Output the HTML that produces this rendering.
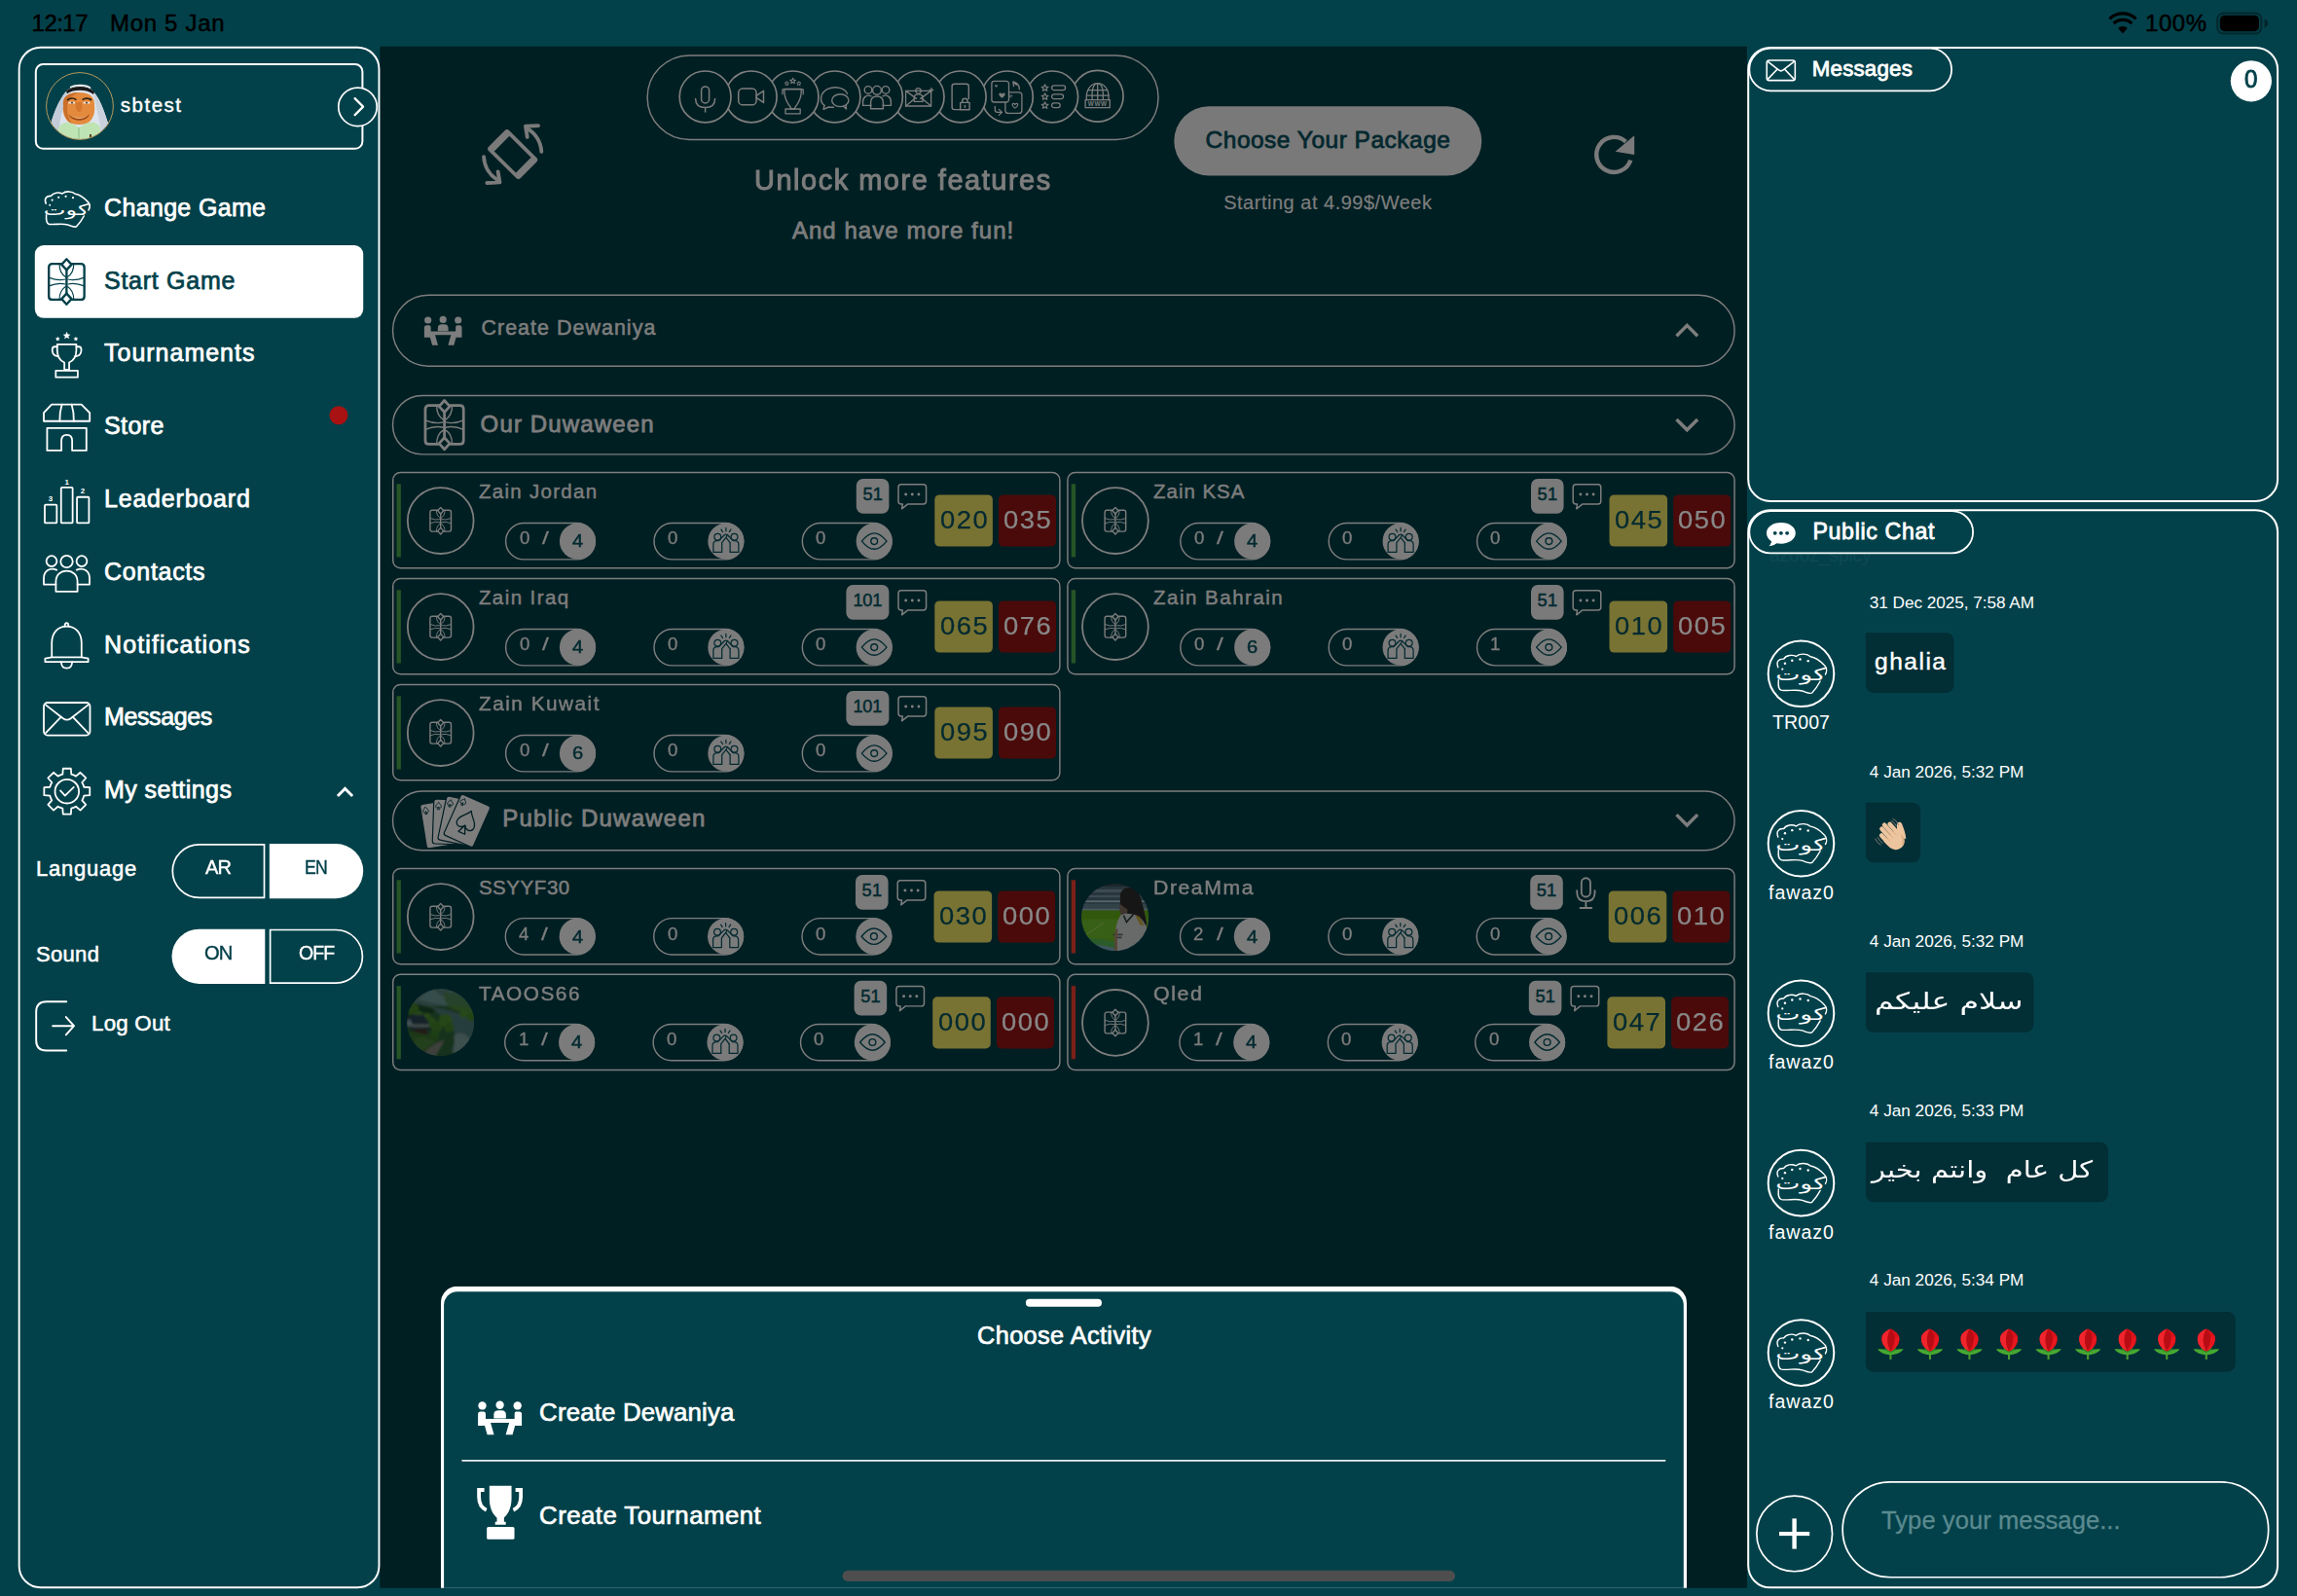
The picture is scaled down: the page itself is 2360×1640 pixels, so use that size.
<!DOCTYPE html>
<html lang="en"><head><meta charset="utf-8"><title>Kout - Start Game</title>
<style>
html,body{margin:0;padding:0;}
body{width:2360px;height:1640px;overflow:hidden;background:#03414a;position:relative;font-family:"Liberation Sans","DejaVu Sans",sans-serif;}
.t{position:absolute;white-space:nowrap;}
div{box-sizing:border-box;}
svg{display:block;}
</style></head><body>
<div class="t" id="sb_time" style="left:32.6px;top:12.0px;font-size:24px;line-height:24px;color:#000;-webkit-text-stroke:0.5px #000;letter-spacing:-0.54px;">12:17</div>
<div class="t" id="sb_date" style="left:113.0px;top:12.0px;font-size:24px;line-height:24px;color:#000;-webkit-text-stroke:0.5px #000;letter-spacing:0.68px;">Mon 5 Jan</div>
<div class="t" id="sb_pct" style="left:2204.0px;top:12.0px;font-size:24px;line-height:24px;color:#000;-webkit-text-stroke:0.5px #000;letter-spacing:0.54px;">100%</div>
<svg style="position:absolute;left:2166px;top:13px;overflow:visible" width="31" height="23"><svg x="0.00" y="0.50" width="30.00" height="21.00" viewBox="0 0 30 21" overflow="visible"><path d="M15 21 L10.2 15.4 A7.2 7.2 0 0 1 19.8 15.4 Z" fill="#000"/><path d="M5.6 10.6 A13.6 13.6 0 0 1 24.4 10.6" fill="none" stroke="#000" stroke-width="3.4" /><path d="M1.4 5.8 A20 20 0 0 1 28.6 5.8" fill="none" stroke="#000" stroke-width="3.2"/></svg></svg>
<svg style="position:absolute;left:2277px;top:12px;overflow:visible" width="49" height="25"><svg x="0.20" y="0.40" width="47.20" height="23.20" viewBox="0 0 47.20 23.20" overflow="visible"><rect x="1.00" y="1.00" width="45.20" height="21.20" rx="6.50" fill="none" stroke="rgba(0,0,0,.38)" stroke-width="2"/></svg></svg>
<svg style="position:absolute;left:2280px;top:15px;overflow:visible" width="43" height="19"><svg x="0.80" y="0.80" width="40.20" height="16.40" viewBox="0 0 40.2 16.4" overflow="visible"><rect width="40.2" height="16.4" rx="4.6" fill="#000"/></svg></svg>
<svg style="position:absolute;left:2326px;top:19px;overflow:visible" width="6" height="11"><svg x="0.60" y="0.60" width="4.00" height="8.80" viewBox="0 0 4 8.8" overflow="visible"><path d="M0 0 Q3.6 1.2 3.6 4.4 Q3.6 7.6 0 8.8 Z" fill="rgba(0,0,0,.42)"/></svg></svg>
<svg style="position:absolute;left:390px;top:47px;overflow:visible" width="1406" height="1586"><svg x="0.30" y="0.70" width="1404.60" height="1584.10" viewBox="0 0 1404.6 1584.1" overflow="visible"><rect width="1404.6" height="1584.1" fill="#001f23"/></svg></svg>
<svg style="position:absolute;left:18px;top:47px;overflow:visible" width="374" height="1587"><svg x="0.70" y="0.80" width="371.70" height="1584.40" viewBox="0 0 371.70 1584.40" overflow="visible"><rect x="0.95" y="0.95" width="369.80" height="1582.50" rx="22.05" fill="#03414a" stroke="#ffffff" stroke-width="1.9"/></svg></svg>
<svg style="position:absolute;left:35px;top:65px;overflow:visible" width="340" height="90"><svg x="0.80" y="0.00" width="337.60" height="88.80" viewBox="0 0 337.60 88.80" overflow="visible"><rect x="1.00" y="1.00" width="335.60" height="86.80" rx="7.50" fill="none" stroke="#ffffff" stroke-width="2"/></svg></svg>
<svg style="position:absolute;left:45.8px;top:73.4px" width="72" height="72" viewBox="-36 -36 72 72"><clipPath id="cpm"><circle cx="0" cy="0" r="34"/></clipPath><g clip-path="url(#cpm)"><rect x="-36" y="-36" width="72" height="72" fill="#03414a"/><path d="M-34 36 C-30 14 -22 -8 -12 -17 C-4 -23 8 -22 14 -15 C22 -6 28 12 34 36 Z" fill="#dde3ec"/><path d="M-34 36 C-30 14 -22 -8 -12 -17 L-16 0 C-20 10 -22 24 -22 36 Z" fill="#c3ccd8"/><path d="M34 36 C28 12 22 -6 14 -15 L17 2 C20 12 22 24 22 36 Z" fill="#c9d1dc"/><path d="M-14 -15.6 C-6 -21.6 8 -21.6 15 -14.6 L14 -12 C8 -17.4 -6 -17.6 -13 -12.8 Z" fill="#1a1a1a"/><path d="M-10 -19.4 C-4 -22.4 6 -22.4 11 -18.6" stroke="#f4f4f4" stroke-width="1.6" fill="none"/><path d="M-17 0 C-18 -9 -13 -14 -1 -14 C11 -14 15.6 -9 15 0 C16 6 14 12 10 16 C6 20 -8 20 -12 16 C-16 12 -18 6 -17 0 Z" fill="#e48a3c"/><path d="M-17 0 C-18 -9 -13 -14 -1 -14 C-9 -11 -13 -6 -13 2 C-13 9 -11 14 -8 18 C-14 15 -17 8 -17 0 Z" fill="#c96f2a"/><path d="M-12 8 C-8 14 6 14 10 8 C8 17 -9 17 -12 8 Z" fill="#9c4a18"/><path d="M-8 10 C-4 12.6 3 12.6 7 10 C4 14 -5 14 -8 10 Z" fill="#e9b184"/><path d="M-4 -4 C-5 2 -3 6 -0.6 6 C2 6 3 2 1.6 -4 Z" fill="#d5782e"/><path d="M-13 -6 C-10 -8.4 -6 -8.4 -3.6 -6.4 M2.6 -6.4 C5 -8.4 9.6 -8.4 12 -6" stroke="#33200f" stroke-width="1.8" fill="none"/><path d="M-11.6 -3.4 H-5 M3.6 -3.4 H10.4" stroke="#f1e7da" stroke-width="1.6"/><circle cx="-8" cy="-3.4" r="0.9" fill="#222"/><circle cx="7" cy="-3.4" r="0.9" fill="#222"/><path d="M-22 36 V22 C-18 16 -12 16 -8 18 L-1 22 L6 18 C12 16 18 16 21 22 V36 Z" fill="#bfe4b4"/><path d="M-1 22 V36" stroke="#8ebb86" stroke-width="1"/><rect x="10" y="29" width="2" height="3.4" fill="#5a3a24"/></g><circle cx="0" cy="0" r="34.4" fill="none" stroke="#b49a5c" stroke-width="1"/></svg>
<div class="t" id="sb_user" style="left:123.8px;top:97.5px;font-size:20.5px;line-height:20.5px;color:#ffffff;-webkit-text-stroke:0.4px #ffffff;letter-spacing:1.50px;">sbtest</div>
<svg style="position:absolute;left:346px;top:89px;overflow:visible" width="44" height="43"><svg x="0.90" y="0.20" width="41.20" height="41.20" viewBox="0 0 41.20 41.20" overflow="visible"><rect x="0.85" y="0.85" width="39.50" height="39.50" rx="19.75" fill="#03414a" stroke="#ffffff" stroke-width="1.7"/></svg></svg>
<svg style="position:absolute;left:362px;top:99px;overflow:visible" width="14" height="22"><svg x="0.60" y="0.60" width="12.00" height="20.00" viewBox="0 0 12 20" overflow="visible"><path d="M2 1.5 L10.5 10 L2 18.5" fill="none" stroke="#ffffff" stroke-width="2.2" stroke-linecap="round" stroke-linejoin="round" /></svg></svg>
<svg style="position:absolute;left:35px;top:252px;overflow:visible" width="340" height="76"><svg x="0.80" y="0.00" width="337.40" height="74.80" viewBox="0 0 337.40 74.80" overflow="visible"><rect width="337.40" height="74.80" rx="9.00" fill="#fff"/></svg></svg>
<div class="t" id="m0" style="left:107.0px;top:200.6px;font-size:25px;line-height:25px;color:#ffffff;-webkit-text-stroke:0.75px #ffffff;letter-spacing:0.34px;">Change Game</div>
<div class="t" id="m1" style="left:107.0px;top:275.5px;font-size:25px;line-height:25px;color:#03414a;-webkit-text-stroke:0.75px #03414a;letter-spacing:0.73px;">Start Game</div>
<div class="t" id="m2" style="left:107.0px;top:350.3px;font-size:25px;line-height:25px;color:#ffffff;-webkit-text-stroke:0.75px #ffffff;letter-spacing:0.99px;">Tournaments</div>
<div class="t" id="m3" style="left:107.0px;top:425.1px;font-size:25px;line-height:25px;color:#ffffff;-webkit-text-stroke:0.75px #ffffff;letter-spacing:0.41px;">Store</div>
<div class="t" id="m4" style="left:107.0px;top:500.0px;font-size:25px;line-height:25px;color:#ffffff;-webkit-text-stroke:0.75px #ffffff;letter-spacing:0.80px;">Leaderboard</div>
<div class="t" id="m5" style="left:107.0px;top:574.8px;font-size:25px;line-height:25px;color:#ffffff;-webkit-text-stroke:0.75px #ffffff;letter-spacing:0.69px;">Contacts</div>
<div class="t" id="m6" style="left:107.0px;top:649.6px;font-size:25px;line-height:25px;color:#ffffff;-webkit-text-stroke:0.75px #ffffff;letter-spacing:1.14px;">Notifications</div>
<div class="t" id="m7" style="left:107.0px;top:724.4px;font-size:25px;line-height:25px;color:#ffffff;-webkit-text-stroke:0.75px #ffffff;letter-spacing:-0.39px;">Messages</div>
<div class="t" id="m8" style="left:107.0px;top:799.3px;font-size:25px;line-height:25px;color:#ffffff;-webkit-text-stroke:0.75px #ffffff;letter-spacing:0.45px;">My settings</div>
<svg style="position:absolute;left:44px;top:195px;overflow:visible" width="50" height="41"><svg x="0.00" y="0.60" width="49.00" height="39.00" viewBox="0 0 49 39" overflow="visible"><g fill="none" stroke="#ffffff" stroke-width="1.6" stroke-linecap="round" stroke-linejoin="round" ><path d="M3.2 13.5 C1.2 8.5 3.5 5.5 8.5 5.8 C10.5 2.2 16.5 1.6 19.8 3.4 C23.5 0.4 30.5 0.8 33.2 3.6 C37.5 4.2 42.5 7.8 46.2 11.8 C48.6 14.2 48.4 17.8 47 20.2"/><path d="M3.6 25.2 C3.2 30.8 3.4 34.2 6.4 34.8 C12.5 35.6 19.5 33.6 25.5 35.4 C29.5 36.8 32.5 38.4 34.6 37.2 C38 33.6 40.2 30.2 42.2 26.4"/></g><g fill="#ffffff"><circle cx="9.6" cy="10" r="1.1"/><circle cx="16.2" cy="7.2" r="1.1"/><circle cx="23.6" cy="6.2" r="1.1"/><circle cx="31" cy="7.6" r="1.1"/><circle cx="7.2" cy="15.2" r="1"/></g><text x="0.8" y="25.6" textLength="46.6" lengthAdjust="spacingAndGlyphs" font-family="DejaVu Sans, sans-serif" font-size="16" fill="#ffffff">كوت</text></svg></svg>
<svg style="position:absolute;left:48px;top:265px;overflow:visible" width="41" height="50"><svg x="0.80" y="0.00" width="39.20" height="49.00" viewBox="0 0 40 50" overflow="visible"><g fill="none" stroke="#03414a" stroke-width="2.4" stroke-linecap="round" stroke-linejoin="round" ><path d="M15 6.2 H5 Q1.4 6.2 1.4 9.8 V40.2 Q1.4 43.8 5 43.8 H15 M25 6.2 H35 Q38.6 6.2 38.6 9.8 V40.2 Q38.6 43.8 35 43.8 H25"/><path d="M20 1.2 L25.2 7 L20 12.6 L14.8 7 Z M20 37.4 L25.2 43 L20 48.8 L14.8 43 Z"/><path d="M20 12.6 V37.4"/></g><g fill="none" stroke="#03414a" stroke-width="1.2" stroke-linecap="round" stroke-linejoin="round" ><path d="M1.4 20.5 Q11 24.5 18.5 22.5 M38.6 20.5 Q29 24.5 21.5 22.5 M1.4 29.5 Q11 25.5 18.5 27.5 M38.6 29.5 Q29 25.5 21.5 27.5"/><path d="M12.5 6.5 Q12.5 16 19 20 M27.5 6.5 Q27.5 16 21 20 M12.5 43.5 Q12.5 34 19 30 M27.5 43.5 Q27.5 34 21 30"/></g></svg></svg>
<svg style="position:absolute;left:52px;top:340px;overflow:visible" width="34" height="51"><svg x="0.40" y="0.00" width="32.40" height="49.20" viewBox="0 0 33 50" overflow="visible"><polygon points="16.50,0.80 17.61,3.47 20.49,3.70 18.30,5.58 18.97,8.40 16.50,6.89 14.03,8.40 14.70,5.58 12.51,3.70 15.39,3.47" fill="#ffffff"/><polygon points="7.00,5.80 7.69,7.45 9.47,7.60 8.11,8.76 8.53,10.50 7.00,9.57 5.47,10.50 5.89,8.76 4.53,7.60 6.31,7.45" fill="#ffffff"/><polygon points="26.00,5.80 26.69,7.45 28.47,7.60 27.11,8.76 27.53,10.50 26.00,9.57 24.47,10.50 24.89,8.76 23.53,7.60 25.31,7.45" fill="#ffffff"/><g fill="none" stroke="#ffffff" stroke-width="1.8" stroke-linecap="round" stroke-linejoin="round" ><path d="M6.5 14 H26.5 V20 C26.5 27.5 22.5 31.5 19 33 V40.5 H14 V33 C10.5 31.5 6.5 27.5 6.5 20 Z"/><path d="M6.5 16.5 H3.8 C0.8 16.5 0.8 21 2.2 23.8 C3.4 26 5.6 26.6 7.6 26.4 M26.5 16.5 H29.2 C32.2 16.5 32.2 21 30.8 23.8 C29.6 26 27.4 26.6 25.4 26.4"/><path d="M5 41.5 H28 V48.5 H5 Z"/></g></svg></svg>
<svg style="position:absolute;left:44px;top:414px;overflow:visible" width="51" height="51"><svg x="0.00" y="0.70" width="49.20" height="49.20" viewBox="0 0 49 49" overflow="visible"><g fill="none" stroke="#ffffff" stroke-width="1.8" stroke-linecap="round" stroke-linejoin="round" ><path d="M9 1 H39.5 L48 9.5 V18 H1 V9.5 Z"/><path d="M19.5 1 Q17 9 17.3 18 M29.5 1 Q32 9 31.7 18"/><path d="M4.4 25 H44.6 V48 H30 V38 Q30 32 24.5 32 Q19 32 19 38 V48 H4.4 Z"/></g></svg></svg>
<svg style="position:absolute;left:45px;top:491px;overflow:visible" width="49" height="49"><svg x="0.00" y="0.00" width="47.40" height="47.40" viewBox="0 0 48 48" overflow="visible"><g fill="none" stroke="#ffffff" stroke-width="1.8" stroke-linecap="round" stroke-linejoin="round" ><rect x="1" y="28" width="12.5" height="19" rx="1"/><rect x="18" y="10" width="12" height="37" rx="1"/><rect x="34.5" y="20" width="12.5" height="27" rx="1"/></g><g font-family="Liberation Sans, sans-serif" font-weight="bold" font-size="8" fill="#ffffff" text-anchor="middle"><text x="24" y="7">1</text><text x="40.5" y="16.5">2</text><text x="7" y="24.5">3</text></g></svg></svg>
<svg style="position:absolute;left:44px;top:570px;overflow:visible" width="50" height="40"><svg x="0.00" y="0.00" width="49.00" height="39.00" viewBox="0 0 49 39" overflow="visible"><g fill="none" stroke="#ffffff" stroke-width="1.8" stroke-linecap="round" stroke-linejoin="round" ><circle cx="9" cy="6.6" r="5.4"/><circle cx="24.5" cy="7" r="6.2"/><circle cx="40" cy="6.6" r="5.4"/><path d="M14.2 15.6 C7 12.5 1 17 1 24 V30.6 H13.4"/><path d="M34.8 15.6 C42 12.5 48 17 48 24 V30.6 H35.6"/><path d="M13.4 37.8 V28 C13.4 21 18 16.6 24.5 16.6 C31 16.6 35.6 21 35.6 28 V37.8 Z"/></g></svg></svg>
<svg style="position:absolute;left:45px;top:638px;overflow:visible" width="48" height="52"><svg x="0.00" y="0.80" width="47.00" height="49.60" viewBox="0 0 48 50" overflow="visible"><g fill="none" stroke="#ffffff" stroke-width="1.8" stroke-linecap="round" stroke-linejoin="round" ><path d="M22 4.6 Q22 1 24 1 Q26 1 26 4.6"/><path d="M8.4 37 V22 C8.4 11 15 4.6 24 4.6 C33 4.6 39.6 11 39.6 22 V37"/><path d="M8.4 37 L1.4 38.4 V41.8 H46.6 V38.4 L39.6 37"/><path d="M9.5 37 H38.5"/><path d="M18.2 42 Q18.6 48.6 24 48.6 Q29.4 48.6 29.8 42"/></g></svg></svg>
<svg style="position:absolute;left:44px;top:721px;overflow:visible" width="51" height="37"><svg x="0.00" y="0.00" width="49.50" height="35.60" viewBox="0 0 50 36" overflow="visible"><g fill="none" stroke="#ffffff" stroke-width="1.8" stroke-linecap="round" stroke-linejoin="round" ><rect x="1" y="1" width="48" height="34" rx="4"/><path d="M3 3.4 L21 17.4 Q25 20.4 29 17.4 L47 3.4"/><path d="M3 32.6 L19 15.8 M47 32.6 L31 15.8"/></g></svg></svg>
<svg style="position:absolute;left:44px;top:788px;overflow:visible" width="51" height="51"><svg x="0.00" y="0.40" width="49.60" height="49.60" viewBox="0 0 50 50" overflow="visible"><g fill="none" stroke="#ffffff" stroke-width="1.8" stroke-linecap="round" stroke-linejoin="round" ><path d="M20.50 7.37 L20.94 1.35 L29.06 1.35 L29.50 7.37 A18.2 18.2 0 0 1 34.29 9.35 L38.85 5.40 L44.60 11.15 L40.65 15.71 A18.2 18.2 0 0 1 42.63 20.50 L48.65 20.94 L48.65 29.06 L42.63 29.50 A18.2 18.2 0 0 1 40.65 34.29 L44.60 38.85 L38.85 44.60 L34.29 40.65 A18.2 18.2 0 0 1 29.50 42.63 L29.06 48.65 L20.94 48.65 L20.50 42.63 A18.2 18.2 0 0 1 15.71 40.65 L11.15 44.60 L5.40 38.85 L9.35 34.29 A18.2 18.2 0 0 1 7.37 29.50 L1.35 29.06 L1.35 20.94 L7.37 20.50 A18.2 18.2 0 0 1 9.35 15.71 L5.40 11.15 L11.15 5.40 L15.71 9.35 A18.2 18.2 0 0 1 20.50 7.37 Z"/><circle cx="25" cy="25" r="12.4"/><path d="M18.2 24.2 L23 29.4 L32 20.6"/></g></svg></svg>
<svg style="position:absolute;left:338px;top:417px;overflow:visible" width="21" height="21"><svg x="0.50" y="0.20" width="19.00" height="19.00" viewBox="0 0 19.00 19.00" overflow="visible"><rect width="19.00" height="19.00" rx="9.50" fill="#a81212"/></svg></svg>
<svg style="position:absolute;left:345px;top:808px;overflow:visible" width="20" height="13"><svg x="0.00" y="0.00" width="19.00" height="11.40" viewBox="0 0 20 12" overflow="visible"><path d="M2 10.5 L10 2.5 L18 10.5" fill="none" stroke="#ffffff" stroke-width="3" stroke-linecap="butt" stroke-linejoin="miter" /></svg></svg>
<div class="t" id="lang" style="left:37.0px;top:881.8px;font-size:22px;line-height:22px;color:#ffffff;-webkit-text-stroke:0.5px #ffffff;letter-spacing:0.77px;">Language</div>
<div class="t" id="sound" style="left:37.0px;top:969.6px;font-size:22px;line-height:22px;color:#ffffff;-webkit-text-stroke:0.5px #ffffff;letter-spacing:0.32px;">Sound</div>
<svg style="position:absolute;left:176px;top:867px;overflow:visible" width="98" height="58"><svg x="0.50" y="0.00" width="95.80" height="56.20" viewBox="0 0 95.80 56.20" overflow="visible"><path d="M95 0.8 H28.1 A27.3 27.3 0 0 0 28.1 55.4 H95 Z" fill="none" stroke="#ffffff" stroke-width="1.7"/></svg></svg>
<svg style="position:absolute;left:276px;top:867px;overflow:visible" width="99" height="58"><svg x="0.80" y="0.00" width="96.40" height="56.20" viewBox="0 0 96.40 56.20" overflow="visible"><path d="M0 0 H68.30 A28.1 28.1 0 0 1 96.40 28.1 V28.10 A28.1 28.1 0 0 1 68.30 56.20 H0 A0 0 0 0 1 0 56.20 V0 A0 0 0 0 1 0 0 Z" fill="#fff"/></svg></svg>
<div class="t" id="ar" style="left:210.6px;top:881.1px;font-size:20.4px;line-height:20.4px;color:#ffffff;-webkit-text-stroke:0.4px #ffffff;letter-spacing:-0.90px;transform-origin:0 50%;transform:scaleX(0.981);">AR</div>
<div class="t" id="en" style="left:313.1px;top:881.1px;font-size:20.4px;line-height:20.4px;color:#03414a;-webkit-text-stroke:0.4px #03414a;letter-spacing:-0.90px;transform-origin:0 50%;transform:scaleX(0.864);">EN</div>
<svg style="position:absolute;left:176px;top:954px;overflow:visible" width="98" height="58"><svg x="0.50" y="0.70" width="95.80" height="56.20" viewBox="0 0 95.80 56.20" overflow="visible"><path d="M28.1 0 H95.80 A0 0 0 0 1 95.80 0 V56.20 A0 0 0 0 1 95.80 56.20 H28.1 A28.1 28.1 0 0 1 0 28.10 V28.1 A28.1 28.1 0 0 1 28.1 0 Z" fill="#fff"/></svg></svg>
<svg style="position:absolute;left:276px;top:954px;overflow:visible" width="99" height="58"><svg x="0.80" y="0.70" width="96.40" height="56.20" viewBox="0 0 96.40 56.20" overflow="visible"><path d="M0.8 0.8 H68.3 A27.3 27.3 0 0 1 68.3 55.4 H0.8 Z" fill="none" stroke="#ffffff" stroke-width="1.7"/></svg></svg>
<div class="t" id="on" style="left:209.9px;top:969.1px;font-size:20.4px;line-height:20.4px;color:#03414a;-webkit-text-stroke:0.4px #03414a;letter-spacing:-0.90px;transform-origin:0 50%;transform:scaleX(0.987);">ON</div>
<div class="t" id="off" style="left:306.7px;top:969.1px;font-size:20.4px;line-height:20.4px;color:#ffffff;-webkit-text-stroke:0.4px #ffffff;letter-spacing:-0.90px;transform-origin:0 50%;transform:scaleX(0.954);">OFF</div>
<svg style="position:absolute;left:36px;top:1027px;overflow:visible" width="42" height="56"><svg x="0.00" y="0.70" width="41.00" height="53.40" viewBox="0 0 42 54" overflow="visible"><g fill="none" stroke="#ffffff" stroke-width="2" stroke-linecap="round" stroke-linejoin="round" ><path d="M33 1.2 H12 Q1.2 1.2 1.2 12 V42 Q1.2 52.8 12 52.8 H33"/><path d="M18.6 26.8 H40 M32.6 17.4 L41 26.8 L32.6 36.2"/></g></svg></svg>
<div class="t" id="logout" style="left:94.0px;top:1040.8px;font-size:22.3px;line-height:22.3px;color:#ffffff;-webkit-text-stroke:0.5px #ffffff;letter-spacing:0.23px;">Log Out</div>
<svg style="position:absolute;left:664px;top:56px;overflow:visible" width="528" height="90"><svg x="0.40" y="0.20" width="526.40" height="88.00" viewBox="0 0 526.40 88.00" overflow="visible"><rect x="0.72" y="0.72" width="524.95" height="86.55" rx="43.27" fill="none" stroke="#7e7e7e" stroke-width="1.45"/></svg></svg>
<svg style="position:absolute;left:1097px;top:68px;overflow:visible" width="62" height="62"><svg x="0.70" y="0.70" width="60.00" height="60.00" viewBox="-30 -30 60 60" overflow="visible"><circle cx="0" cy="0" r="26.4" fill="#001f23" stroke="#7e7e7e" stroke-width="1.7"/><g fill="none" stroke="#7d7d7d" stroke-width="1.3" stroke-linecap="round" stroke-linejoin="round" ><path d="M-11.4 4 V1 C-11.4 -8 -6 -13 0 -13 C6 -13 11.4 -8 11.4 1 V4"/><path d="M0 -13 V4 M-5.6 4 V-3 C-5.6 -9 -3 -13 0 -13 M5.6 4 V-3 C5.6 -9 3 -13 0 -13"/><path d="M-10 -6 H10 M-11.4 -0.6 H11.4"/><rect x="-12.6" y="4" width="25.2" height="8"/></g><text x="0" y="10.6" text-anchor="middle" font-family="Liberation Sans, sans-serif" font-weight="bold" font-size="6.4" letter-spacing="0.6" fill="#7d7d7d">WWW</text></svg></svg>
<svg style="position:absolute;left:1051px;top:69px;overflow:visible" width="62" height="62"><svg x="0.20" y="0.40" width="60.00" height="60.00" viewBox="-30 -30 60 60" overflow="visible"><circle cx="0" cy="0" r="26.4" fill="#001f23" stroke="#7e7e7e" stroke-width="1.7"/><polygon points="-7.60,-12.60 -6.65,-10.31 -4.18,-10.11 -6.06,-8.50 -5.48,-6.09 -7.60,-7.38 -9.72,-6.09 -9.14,-8.50 -11.02,-10.11 -8.55,-10.31" fill="none" stroke="#7d7d7d" stroke-width="1.2" stroke-linejoin="round"/><polygon points="-7.60,-3.60 -6.65,-1.31 -4.18,-1.11 -6.06,0.50 -5.48,2.91 -7.60,1.62 -9.72,2.91 -9.14,0.50 -11.02,-1.11 -8.55,-1.31" fill="none" stroke="#7d7d7d" stroke-width="1.2" stroke-linejoin="round"/><polygon points="-7.60,5.40 -6.65,7.69 -4.18,7.89 -6.06,9.50 -5.48,11.91 -7.60,10.62 -9.72,11.91 -9.14,9.50 -11.02,7.89 -8.55,7.69" fill="none" stroke="#7d7d7d" stroke-width="1.2" stroke-linejoin="round"/><g fill="none" stroke="#7d7d7d" stroke-width="1.3" stroke-linecap="round" stroke-linejoin="round" ><rect x="-0.6" y="-11.6" width="14" height="4.8" rx="2.4"/><rect x="-0.6" y="-2.6" width="12" height="4.8" rx="2.4"/><rect x="-0.6" y="6.4" width="8.6" height="4.8" rx="2.4"/></g></svg></svg>
<svg style="position:absolute;left:1004px;top:69px;overflow:visible" width="62" height="62"><svg x="0.90" y="0.40" width="60.00" height="60.00" viewBox="-30 -30 60 60" overflow="visible"><circle cx="0" cy="0" r="26.4" fill="#001f23" stroke="#7e7e7e" stroke-width="1.7"/><g fill="none" stroke="#7d7d7d" stroke-width="1.3" stroke-linecap="round" stroke-linejoin="round" ><rect x="-2" y="-4.6" width="17" height="21.6" rx="3" fill="#001f23"/><rect x="-16" y="-16" width="17.6" height="21.6" rx="2.6" fill="#001f23"/><path d="M6 -15.4 L9.4 -12 M6 -15.4 L6.6 -10.8 M6 -15.4 Q12.6 -13.6 12.4 -7.6" /><path d="M-12.6 10 V13.4 Q-12.6 16 -10 16 H-6 M-8.6 13 L-5.4 16 L-8.6 19"/></g><path d="M-5.4 1.46 C-10.84 -2.2800000000000002 -8.120000000000001 -5.68 -5.4 -2.79 C-2.68 -5.68 0.040000000000000036 -2.2800000000000002 -5.4 1.46 Z" fill="#7d7d7d"/><path d="M-11.4 -9.56 C-13.96 -11.32 -12.68 -12.92 -11.4 -11.56 C-10.120000000000001 -12.92 -8.84 -11.32 -11.4 -9.56 Z" fill="#7d7d7d"/><path d="M8 11.7 C3.1999999999999993 8.4 5.6 5.4 8 7.95 C10.4 5.4 12.8 8.4 8 11.7 Z" fill="none" stroke="#7d7d7d" stroke-width="1.1"/><path d="M3.4 0.7500000000000001 C0.9999999999999996 -0.9 2.1999999999999997 -2.4 3.4 -1.125 C4.6 -2.4 5.800000000000001 -0.9 3.4 0.7500000000000001 Z" fill="none" stroke="#7d7d7d" stroke-width="0.9"/></svg></svg>
<svg style="position:absolute;left:956px;top:69px;overflow:visible" width="62" height="62"><svg x="0.70" y="0.40" width="60.00" height="60.00" viewBox="-30 -30 60 60" overflow="visible"><circle cx="0" cy="0" r="26.4" fill="#001f23" stroke="#7e7e7e" stroke-width="1.7"/><g fill="none" stroke="#7d7d7d" stroke-width="1.4" stroke-linecap="round" stroke-linejoin="round" ><path d="M0 13.2 H-6 Q-8.6 13.2 -8.6 10.6 V-10.6 Q-8.6 -13.2 -6 -13.2 H6 Q8.6 -13.2 8.6 -10.6 V2"/><rect x="0" y="6" width="9.4" height="7.4"/><path d="M2 6 V4.4 Q2 1.8 4.7 1.8 Q7.4 1.8 7.4 4.4 V6"/><path d="M4.7 9 V10.8"/></g></svg></svg>
<svg style="position:absolute;left:913px;top:69px;overflow:visible" width="62" height="62"><svg x="0.60" y="0.40" width="60.00" height="60.00" viewBox="-30 -30 60 60" overflow="visible"><circle cx="0" cy="0" r="26.4" fill="#001f23" stroke="#7e7e7e" stroke-width="1.7"/><g fill="none" stroke="#7d7d7d" stroke-width="1.3" stroke-linecap="round" stroke-linejoin="round" ><rect x="-13" y="-6" width="26" height="15.6"/><path d="M-13 -6 L-2 2 M13 -6 L2 2 M-13 9.6 L-4 2 M13 9.6 L4 2"/><circle cx="0" cy="-6" r="2.8" /><path d="M-4.4 5 V1 Q-4.4 -2.6 0 -2.6 Q4.4 -2.6 4.4 1 V5 Z"/><path d="M13.4 -9 V-5 M11.6 -7 H15.2"/></g></svg></svg>
<svg style="position:absolute;left:871px;top:69px;overflow:visible" width="61" height="62"><svg x="0.00" y="0.40" width="60.00" height="60.00" viewBox="-30 -30 60 60" overflow="visible"><circle cx="0" cy="0" r="26.4" fill="#001f23" stroke="#7e7e7e" stroke-width="1.7"/><g fill="none" stroke="#7d7d7d" stroke-width="1.4" stroke-linecap="round" stroke-linejoin="round" ><circle cx="-9" cy="-7" r="3.8"/><circle cx="0" cy="-6.6" r="4.4"/><circle cx="9" cy="-7" r="3.8"/><path d="M-6 -0.6 C-10 -2.4 -14.4 0 -14.4 5 V9 H-6"/><path d="M6 -0.6 C10 -2.4 14.4 0 14.4 5 V9 H6"/><path d="M-6.4 12.4 V6 C-6.4 1.6 -3.6 -0.4 0 -0.4 C3.6 -0.4 6.4 1.6 6.4 6 V12.4 Z"/></g></svg></svg>
<svg style="position:absolute;left:827px;top:69px;overflow:visible" width="62" height="62"><svg x="0.50" y="0.40" width="60.00" height="60.00" viewBox="-30 -30 60 60" overflow="visible"><circle cx="0" cy="0" r="26.4" fill="#001f23" stroke="#7e7e7e" stroke-width="1.7"/><g fill="none" stroke="#7d7d7d" stroke-width="1.4" stroke-linecap="round" stroke-linejoin="round" ><path d="M-10.5 9 C-16 5 -15 -4 -7 -8 C1 -11.5 11 -9 13 -3"/><path d="M-10.5 9 L-11.5 13 L-6 10.6 C-4 11 -2.5 11 -1 10.8"/><ellipse cx="5.8" cy="3.8" rx="8.6" ry="6.4"/><path d="M9 9.8 L12 12.6 L11.6 8.6"/></g></svg></svg>
<svg style="position:absolute;left:784px;top:69px;overflow:visible" width="62" height="62"><svg x="0.60" y="0.40" width="60.00" height="60.00" viewBox="-30 -30 60 60" overflow="visible"><circle cx="0" cy="0" r="26.4" fill="#001f23" stroke="#7e7e7e" stroke-width="1.7"/><polygon points="0.00,-19.20 0.79,-17.29 2.85,-17.13 1.28,-15.78 1.76,-13.77 0.00,-14.85 -1.76,-13.77 -1.28,-15.78 -2.85,-17.13 -0.79,-17.29" fill="none" stroke="#7d7d7d" stroke-width="1.1" stroke-linejoin="round"/><polygon points="-6.20,-15.80 -5.62,-14.40 -4.11,-14.28 -5.26,-13.29 -4.91,-11.82 -6.20,-12.61 -7.49,-11.82 -7.14,-13.29 -8.29,-14.28 -6.78,-14.40" fill="none" stroke="#7d7d7d" stroke-width="1" stroke-linejoin="round"/><polygon points="6.20,-15.80 6.78,-14.40 8.29,-14.28 7.14,-13.29 7.49,-11.82 6.20,-12.61 4.91,-11.82 5.26,-13.29 4.11,-14.28 5.62,-14.40" fill="none" stroke="#7d7d7d" stroke-width="1" stroke-linejoin="round"/><g fill="none" stroke="#7d7d7d" stroke-width="1.3" stroke-linecap="round" stroke-linejoin="round" ><path d="M-8.6 -8 H8.6 V-4.6 C8.6 3 4.6 8 2 11.4 V12.6 H-2 V11.4 C-4.6 8 -8.6 3 -8.6 -4.6 Z"/><path d="M-10.6 -7.6 H10.6 V-2.6 M-10.6 -7.6 V-2.6"/><path d="M-7.6 12.6 H7.6 V17.4 H-7.6 Z"/></g></svg></svg>
<svg style="position:absolute;left:741px;top:69px;overflow:visible" width="62" height="62"><svg x="0.70" y="0.40" width="60.00" height="60.00" viewBox="-30 -30 60 60" overflow="visible"><circle cx="0" cy="0" r="26.4" fill="#001f23" stroke="#7e7e7e" stroke-width="1.7"/><g fill="none" stroke="#7d7d7d" stroke-width="1.5" stroke-linecap="round" stroke-linejoin="round" ><rect x="-13" y="-8.4" width="18.4" height="16.8" rx="4.4"/><path d="M5.4 -1 L12.8 -6 V6 L5.4 1"/></g></svg></svg>
<svg style="position:absolute;left:694px;top:69px;overflow:visible" width="62" height="62"><svg x="0.60" y="0.40" width="60.00" height="60.00" viewBox="-30 -30 60 60" overflow="visible"><circle cx="0" cy="0" r="26.4" fill="#001f23" stroke="#7e7e7e" stroke-width="1.7"/><g fill="none" stroke="#7d7d7d" stroke-width="1.5" stroke-linecap="round" stroke-linejoin="round" ><rect x="-4" y="-10.5" width="8" height="17" rx="4"/><path d="M-10 2 Q-10 11 0 11 Q10 11 10 2 M0 11 V15.5"/></g></svg></svg>
<svg style="position:absolute;left:496px;top:127px;overflow:visible" width="64" height="65"><svg x="0.00" y="0.80" width="62.40" height="62.40" viewBox="0 0 63 63" overflow="visible"><g transform="translate(31 31.1) rotate(44.7)"><path fill-rule="evenodd" fill="#7a7a7a" d="M-23.2 -11.8 Q-23.2 -15 -20 -15 H20 Q23.2 -15 23.2 -11.8 V11.8 Q23.2 15 20 15 H-20 Q-23.2 15 -23.2 11.8 Z M-15.8 -11.2 V11.2 H15.8 V-11.2 Z"/></g><g fill="none" stroke="#7a7a7a" stroke-width="3.9" stroke-linecap="round" stroke-linejoin="round" ><path d="M60.9 28.4 A30 30 0 0 0 46 4.2"/><path d="M57.6 1.4 L44.4 2 L46.2 13.2"/><path d="M1.1 33.8 A30 30 0 0 0 16 58"/><path d="M4.4 60.8 L17.6 60.2 L15.8 49"/></g></svg></svg>
<div class="t" id="unlock" style="left:775.3px;top:170.8px;font-size:28.6px;line-height:28.6px;color:#7d7d7d;-webkit-text-stroke:1.0px #7d7d7d;letter-spacing:1.50px;transform-origin:0 50%;transform:scaleX(1.013);">Unlock more features</div>
<div class="t" id="fun" style="left:813.9px;top:225.4px;font-size:24px;line-height:24px;color:#7d7d7d;-webkit-text-stroke:0.8px #7d7d7d;letter-spacing:1.05px;">And have more fun!</div>
<svg style="position:absolute;left:1206px;top:109px;overflow:visible" width="318" height="73"><svg x="0.30" y="0.30" width="316.00" height="71.20" viewBox="0 0 316.00 71.20" overflow="visible"><rect width="316.00" height="71.20" rx="35.60" fill="#797979"/></svg></svg>
<div class="t" id="pkg" style="left:1238.6px;top:131.5px;font-size:24.5px;line-height:24.5px;color:#04282e;-webkit-text-stroke:0.8px #04282e;letter-spacing:0.49px;">Choose Your Package</div>
<div class="t" id="starting" style="left:1257.2px;top:197.5px;font-size:20px;line-height:20px;color:#7d7d7d;-webkit-text-stroke:0.2px #7d7d7d;letter-spacing:0.51px;">Starting at 4.99$/Week</div>
<svg style="position:absolute;left:1638px;top:137px;overflow:visible" width="44" height="44"><svg x="0.00" y="0.60" width="43.00" height="42.00" viewBox="0 0 43 42" overflow="visible"><path d="M32.4 8 A18 18 0 1 0 37.3 27" fill="none" stroke="#7a7a7a" stroke-width="4.4"/><path d="M21.6 18.2 L41.2 1.6 V21.4 Z" fill="#7a7a7a"/></svg></svg>
<svg style="position:absolute;left:402px;top:302px;overflow:visible" width="1382" height="77"><svg x="0.80" y="0.60" width="1380.00" height="74.40" viewBox="0 0 1380.00 74.40" overflow="visible"><rect x="0.72" y="0.72" width="1378.55" height="72.95" rx="36.48" fill="none" stroke="#7e7e7e" stroke-width="1.45"/></svg></svg>
<svg style="position:absolute;left:435px;top:325px;overflow:visible" width="42" height="31"><svg x="0.30" y="0.00" width="39.80" height="29.90" viewBox="0 0 40 30" overflow="visible"><g fill="#7d7d7d"><circle cx="4.4" cy="4" r="3.6"/><circle cx="20" cy="3.4" r="3.6"/><circle cx="35.6" cy="4" r="3.6"/><path d="M14.6 15.2 V12.2 Q14.6 8.2 18.6 8.2 H21.4 Q25.4 8.2 25.4 12.2 V15.2 Z"/><path d="M0.6 11.6 Q0.6 9.2 3 9.2 H5.4 Q7.4 9.2 7.4 11.2 V15.6 H33 V11.2 Q33 9.2 34.6 9.2 H37 Q39.4 9.2 39.4 11.6 V21.8 H33.4 L31.2 29.8 H25.2 L28.2 19.2 H11.8 L14.8 29.8 H8.8 L6.6 21.8 H0.6 Z"/></g></svg></svg>
<div class="t" id="cd" style="left:494.5px;top:327.2px;font-size:21.4px;line-height:21.4px;color:#7d7d7d;-webkit-text-stroke:0.6px #7d7d7d;letter-spacing:1.05px;">Create Dewaniya</div>
<svg style="position:absolute;left:1719px;top:331px;overflow:visible" width="29" height="18"><svg x="0.80" y="0.00" width="27.00" height="16.20" viewBox="0 0 20 12" overflow="visible"><path d="M2 10.5 L10 2.5 L18 10.5" fill="none" stroke="#7d7d7d" stroke-width="2.6" stroke-linecap="butt" stroke-linejoin="miter" /></svg></svg>
<svg style="position:absolute;left:402px;top:405px;overflow:visible" width="1382" height="64"><svg x="0.80" y="0.80" width="1380.00" height="61.80" viewBox="0 0 1380.00 61.80" overflow="visible"><rect x="0.72" y="0.72" width="1378.55" height="60.35" rx="30.17" fill="none" stroke="#7e7e7e" stroke-width="1.45"/></svg></svg>
<svg style="position:absolute;left:435px;top:410px;overflow:visible" width="44" height="54"><svg x="0.30" y="0.20" width="42.60" height="52.80" viewBox="0 0 40 50" overflow="visible"><g fill="none" stroke="#7d7d7d" stroke-width="2.6" stroke-linecap="round" stroke-linejoin="round" ><path d="M15 6.2 H5 Q1.4 6.2 1.4 9.8 V40.2 Q1.4 43.8 5 43.8 H15 M25 6.2 H35 Q38.6 6.2 38.6 9.8 V40.2 Q38.6 43.8 35 43.8 H25"/><path d="M20 1.2 L25.2 7 L20 12.6 L14.8 7 Z M20 37.4 L25.2 43 L20 48.8 L14.8 43 Z"/><path d="M20 12.6 V37.4"/></g><g fill="none" stroke="#7d7d7d" stroke-width="1.3" stroke-linecap="round" stroke-linejoin="round" ><path d="M1.4 20.5 Q11 24.5 18.5 22.5 M38.6 20.5 Q29 24.5 21.5 22.5 M1.4 29.5 Q11 25.5 18.5 27.5 M38.6 29.5 Q29 25.5 21.5 27.5"/><path d="M12.5 6.5 Q12.5 16 19 20 M27.5 6.5 Q27.5 16 21 20 M12.5 43.5 Q12.5 34 19 30 M27.5 43.5 Q27.5 34 21 30"/></g></svg></svg>
<div class="t" id="od" style="left:493.6px;top:423.7px;font-size:24px;line-height:24px;color:#7d7d7d;-webkit-text-stroke:0.85px #7d7d7d;letter-spacing:1.15px;">Our Duwaween</div>
<svg style="position:absolute;left:1719px;top:428px;overflow:visible" width="29" height="19"><svg x="0.80" y="0.90" width="27.00" height="16.20" viewBox="0 0 20 12" overflow="visible"><path d="M2 1.5 L10 9.5 L18 1.5" fill="none" stroke="#7d7d7d" stroke-width="2.6" stroke-linecap="butt" stroke-linejoin="miter" /></svg></svg>
<svg style="position:absolute;left:402px;top:812px;overflow:visible" width="1382" height="64"><svg x="0.80" y="0.30" width="1380.00" height="62.20" viewBox="0 0 1380.00 62.20" overflow="visible"><rect x="0.72" y="0.72" width="1378.55" height="60.75" rx="30.38" fill="none" stroke="#7e7e7e" stroke-width="1.45"/></svg></svg>
<svg style="position:absolute;left:433px;top:815px;overflow:visible" width="71" height="57"><svg x="0.50" y="0.90" width="69.00" height="55.00" viewBox="0 0 69 55" overflow="visible"><g transform="translate(17.8 31) rotate(-9)"><rect x="-16.5" y="-23" width="33" height="46" rx="2.6" fill="#7d7d7d" stroke="#001f23" stroke-width="1.2"/><path fill="none" stroke="#001f23" stroke-width="0.8" stroke-linejoin="round" d="M-11.5 -19.8 C-10.62 -17.82 -8.2 -16.94 -8.64 -14.96 C-9.08 -13.42 -10.84 -13.64 -11.5 -14.96 C-12.16 -13.64 -13.92 -13.42 -14.36 -14.96 C-14.8 -16.94 -12.38 -17.82 -11.5 -19.8 Z M-11.5 -14.96 L-12.6 -12.32 H-10.4 Z"/></g><g transform="translate(28 28.6) rotate(2)"><rect x="-16.5" y="-23" width="33" height="46" rx="2.6" fill="#7d7d7d" stroke="#001f23" stroke-width="1.2"/><path fill="none" stroke="#001f23" stroke-width="0.8" stroke-linejoin="round" d="M-11.5 -19.8 C-10.62 -17.82 -8.2 -16.94 -8.64 -14.96 C-9.08 -13.42 -10.84 -13.64 -11.5 -14.96 C-12.16 -13.64 -13.92 -13.42 -14.36 -14.96 C-14.8 -16.94 -12.38 -17.82 -11.5 -19.8 Z M-11.5 -14.96 L-12.6 -12.32 H-10.4 Z"/></g><g transform="translate(37 27.6) rotate(12)"><rect x="-16.5" y="-23" width="33" height="46" rx="2.6" fill="#7d7d7d" stroke="#001f23" stroke-width="1.2"/><path fill="none" stroke="#001f23" stroke-width="0.8" stroke-linejoin="round" d="M-11.5 -19.8 C-10.62 -17.82 -8.2 -16.94 -8.64 -14.96 C-9.08 -13.42 -10.84 -13.64 -11.5 -14.96 C-12.16 -13.64 -13.92 -13.42 -14.36 -14.96 C-14.8 -16.94 -12.38 -17.82 -11.5 -19.8 Z M-11.5 -14.96 L-12.6 -12.32 H-10.4 Z"/></g><g transform="translate(46.4 27.4) rotate(24)"><rect x="-16.5" y="-23" width="33" height="46" rx="2.6" fill="#7d7d7d" stroke="#001f23" stroke-width="1.2"/><path fill="none" stroke="#001f23" stroke-width="1.3" stroke-linejoin="round" d="M0 -10.8 C2.8800000000000003 -4.32 10.8 -1.4400000000000002 9.360000000000001 5.04 C7.920000000000001 10.08 2.16 9.360000000000001 0 5.04 C-2.16 9.360000000000001 -7.920000000000001 10.08 -9.360000000000001 5.04 C-10.8 -1.4400000000000002 -2.8800000000000003 -4.32 0 -10.8 Z M0 5.04 L-3.6 13.68 H3.6 Z"/><path fill="none" stroke="#001f23" stroke-width="0.8" stroke-linejoin="round" d="M-11.5 -19.8 C-10.62 -17.82 -8.2 -16.94 -8.64 -14.96 C-9.08 -13.42 -10.84 -13.64 -11.5 -14.96 C-12.16 -13.64 -13.92 -13.42 -14.36 -14.96 C-14.8 -16.94 -12.38 -17.82 -11.5 -19.8 Z M-11.5 -14.96 L-12.6 -12.32 H-10.4 Z"/></g></svg></svg>
<div class="t" id="pd" style="left:516.2px;top:829.4px;font-size:24px;line-height:24px;color:#7d7d7d;-webkit-text-stroke:0.85px #7d7d7d;letter-spacing:1.24px;">Public Duwaween</div>
<svg style="position:absolute;left:1719px;top:835px;overflow:visible" width="29" height="18"><svg x="0.80" y="0.10" width="27.00" height="16.20" viewBox="0 0 20 12" overflow="visible"><path d="M2 1.5 L10 9.5 L18 1.5" fill="none" stroke="#7d7d7d" stroke-width="2.6" stroke-linecap="butt" stroke-linejoin="miter" /></svg></svg>
<svg style="position:absolute;left:403px;top:484px;overflow:visible" width="688" height="102"><svg x="0.00" y="0.80" width="686.60" height="99.70" viewBox="0 0 686.60 99.70" overflow="visible"><rect x="0.72" y="0.72" width="685.15" height="98.25" rx="7.78" fill="none" stroke="#7e7e7e" stroke-width="1.45"/></svg></svg>
<svg style="position:absolute;left:407px;top:497px;overflow:visible" width="6" height="77"><svg x="0.50" y="0.30" width="4.40" height="75.20" viewBox="0 0 4.40 75.20" overflow="visible"><rect width="4.40" height="75.20" rx="0.00" fill="#265426"/></svg></svg>
<svg style="position:absolute;left:416px;top:499px;overflow:visible" width="74" height="74"><svg x="0.70" y="0.10" width="72.00" height="72.00" viewBox="-36 -36 72 72" overflow="visible"><circle cx="0" cy="0" r="33.9" fill="none" stroke="#7e7e7e" stroke-width="1.8"/><g transform="translate(-11.6 -14.4) scale(0.58)"><g fill="none" stroke="#7d7d7d" stroke-width="2.4" stroke-linecap="round" stroke-linejoin="round" ><path d="M15 6.2 H5 Q1.4 6.2 1.4 9.8 V40.2 Q1.4 43.8 5 43.8 H15 M25 6.2 H35 Q38.6 6.2 38.6 9.8 V40.2 Q38.6 43.8 35 43.8 H25"/><path d="M20 1.2 L25.2 7 L20 12.6 L14.8 7 Z M20 37.4 L25.2 43 L20 48.8 L14.8 43 Z"/><path d="M20 12.6 V37.4"/></g><g fill="none" stroke="#7d7d7d" stroke-width="1.6" stroke-linecap="round" stroke-linejoin="round" ><path d="M1.4 20.5 Q11 24.5 18.5 22.5 M38.6 20.5 Q29 24.5 21.5 22.5 M1.4 29.5 Q11 25.5 18.5 27.5 M38.6 29.5 Q29 25.5 21.5 27.5"/><path d="M12.5 6.5 Q12.5 16 19 20 M27.5 6.5 Q27.5 16 21 20 M12.5 43.5 Q12.5 34 19 30 M27.5 43.5 Q27.5 34 21 30"/></g></g></svg></svg>
<div class="t" id="c0n" style="left:491.9px;top:495.3px;font-size:20.5px;line-height:20.5px;color:#7d7d7d;-webkit-text-stroke:0.5px #7d7d7d;letter-spacing:1.29px;">Zain Jordan</div>
<svg style="position:absolute;left:518px;top:536px;overflow:visible" width="96" height="41"><svg x="0.90" y="0.80" width="93.20" height="38.80" viewBox="0 0 93.20 38.80" overflow="visible"><rect x="0.72" y="0.72" width="91.75" height="37.35" rx="18.67" fill="none" stroke="#7e7e7e" stroke-width="1.45"/></svg></svg>
<svg style="position:absolute;left:574px;top:537px;overflow:visible" width="40" height="39"><svg x="0.90" y="0.50" width="37.20" height="37.20" viewBox="0 0 37.20 37.20" overflow="visible"><rect width="37.20" height="37.20" rx="18.60" fill="#7b7b7b"/></svg></svg>
<div class="t" id="c0a" style="left:533.5px;top:545.4px;font-size:17.7px;line-height:17.7px;color:#7d7d7d;-webkit-text-stroke:0.3px #7d7d7d;transform-origin:0 50%;transform:scaleX(1.057);">0</div>
<div class="t" id="c0s" style="left:556.7px;top:545.4px;font-size:17.7px;line-height:17.7px;color:#7d7d7d;-webkit-text-stroke:0.3px #7d7d7d;transform-origin:0 50%;transform:scaleX(1.382);">/</div>
<div class="t" id="c0m" style="left:587.9px;top:547.4px;font-size:18.5px;line-height:18.5px;color:#032a30;-webkit-text-stroke:0.5px #032a30;transform-origin:0 50%;transform:scaleX(1.088);">4</div>
<svg style="position:absolute;left:671px;top:536px;overflow:visible" width="95" height="41"><svg x="0.30" y="0.80" width="93.20" height="38.80" viewBox="0 0 93.20 38.80" overflow="visible"><rect x="0.72" y="0.72" width="91.75" height="37.35" rx="18.67" fill="none" stroke="#7e7e7e" stroke-width="1.45"/></svg></svg>
<svg style="position:absolute;left:727px;top:537px;overflow:visible" width="39" height="39"><svg x="0.30" y="0.50" width="37.20" height="37.20" viewBox="0 0 37.20 37.20" overflow="visible"><rect width="37.20" height="37.20" rx="18.60" fill="#7b7b7b"/></svg></svg>
<div class="t" id="c0h" style="left:685.9px;top:545.4px;font-size:17.7px;line-height:17.7px;color:#7d7d7d;-webkit-text-stroke:0.3px #7d7d7d;transform-origin:0 50%;transform:scaleX(1.057);">0</div>
<svg style="position:absolute;left:730px;top:541px;overflow:visible" width="32" height="32"><svg x="0.90" y="0.10" width="30.00" height="30.00" viewBox="-15 -15 30 30" overflow="visible"><g fill="none" stroke="#032a30" stroke-width="1.25" stroke-linecap="round" stroke-linejoin="round" ><circle cx="-8.6" cy="-4.4" r="3.4"/><circle cx="8.6" cy="-4.4" r="3.4"/><path d="M-13 11.4 V3.6 Q-13 -0.4 -9 -0.4 H-7.6 L-1.4 -6.6 Q0 -7.6 0.8 -6.4 Q1.4 -5.4 0.4 -4.2 L-4.2 1.6 V11.4 Z"/><path d="M13 11.4 V3.6 Q13 -0.4 9 -0.4 H7.6 L1.4 -6.6 M4.2 1.6 V11.4 H13"/><path d="M4.2 1.6 L0.6 -3"/><path d="M0 -10.4 V-13.6 M-3.4 -9.6 L-5 -12 M3.4 -9.6 L5 -12"/></g></svg></svg>
<svg style="position:absolute;left:823px;top:536px;overflow:visible" width="95" height="41"><svg x="0.60" y="0.80" width="93.20" height="38.80" viewBox="0 0 93.20 38.80" overflow="visible"><rect x="0.72" y="0.72" width="91.75" height="37.35" rx="18.67" fill="none" stroke="#7e7e7e" stroke-width="1.45"/></svg></svg>
<svg style="position:absolute;left:879px;top:537px;overflow:visible" width="39" height="39"><svg x="0.60" y="0.50" width="37.20" height="37.20" viewBox="0 0 37.20 37.20" overflow="visible"><rect width="37.20" height="37.20" rx="18.60" fill="#7b7b7b"/></svg></svg>
<div class="t" id="c0e" style="left:838.2px;top:545.4px;font-size:17.7px;line-height:17.7px;color:#7d7d7d;-webkit-text-stroke:0.3px #7d7d7d;transform-origin:0 50%;transform:scaleX(1.057);">0</div>
<svg style="position:absolute;left:883px;top:541px;overflow:visible" width="32" height="32"><svg x="0.20" y="0.10" width="30.00" height="30.00" viewBox="-15 -15 30 30" overflow="visible"><g fill="none" stroke="#032a30" stroke-width="1.4" stroke-linecap="round" stroke-linejoin="round" ><path d="M-12.8 0 Q-6 -8.2 0 -8.2 Q6 -8.2 12.8 0 Q6 8.2 0 8.2 Q-6 8.2 -12.8 0 Z"/><circle cx="0" cy="0" r="3.4"/></g></svg></svg>
<svg style="position:absolute;left:879px;top:492px;overflow:visible" width="36" height="37"><svg x="0.80" y="0.00" width="33.60" height="35.80" viewBox="0 0 33.60 35.80" overflow="visible"><rect width="33.60" height="35.80" rx="7.00" fill="#7a7a7a"/></svg></svg>
<div class="t" id="c0b" style="left:886.4px;top:498.9px;font-size:18.2px;line-height:18.2px;color:#032a30;-webkit-text-stroke:0.5px #032a30;letter-spacing:0.17px;">51</div>
<svg style="position:absolute;left:922px;top:496px;overflow:visible" width="32" height="29"><svg x="0.00" y="0.80" width="30.60" height="26.60" viewBox="0 0 31 27" overflow="visible"><g fill="none" stroke="#7e7e7e" stroke-width="1.5" stroke-linecap="round" stroke-linejoin="round" ><path d="M4 1 H27 Q30 1 30 4 V18.6 Q30 21.6 27 21.6 H10.6 L4.6 26.4 L5.4 21.6 H4 Q1 21.6 1 18.6 V4 Q1 1 4 1 Z"/></g><g fill="#7e7e7e"><circle cx="8.8" cy="11.4" r="1.5"/><circle cx="15.5" cy="11.4" r="1.5"/><circle cx="22.2" cy="11.4" r="1.5"/></g></svg></svg>
<svg style="position:absolute;left:960px;top:508px;overflow:visible" width="61" height="55"><svg x="0.30" y="0.40" width="59.60" height="53.20" viewBox="0 0 59.60 53.20" overflow="visible"><rect width="59.60" height="53.20" rx="5.00" fill="#787333"/></svg></svg>
<svg style="position:absolute;left:1026px;top:508px;overflow:visible" width="60" height="55"><svg x="0.00" y="0.40" width="59.00" height="53.20" viewBox="0 0 59.00 53.20" overflow="visible"><rect width="59.00" height="53.20" rx="5.00" fill="#4b0a0a"/></svg></svg>
<div class="t" id="c0y" style="left:965.6px;top:520.8px;font-size:26.4px;line-height:26.4px;color:#032a30;-webkit-text-stroke:0.25px #032a30;letter-spacing:1.50px;transform-origin:0 50%;transform:scaleX(1.037);">020</div>
<div class="t" id="c0r" style="left:1031.0px;top:520.8px;font-size:26.4px;line-height:26.4px;color:#888888;-webkit-text-stroke:0.25px #888888;letter-spacing:1.50px;transform-origin:0 50%;transform:scaleX(1.037);">035</div>
<svg style="position:absolute;left:1096px;top:484px;overflow:visible" width="688" height="102"><svg x="0.20" y="0.80" width="686.60" height="99.70" viewBox="0 0 686.60 99.70" overflow="visible"><rect x="0.72" y="0.72" width="685.15" height="98.25" rx="7.78" fill="none" stroke="#7e7e7e" stroke-width="1.45"/></svg></svg>
<svg style="position:absolute;left:1100px;top:497px;overflow:visible" width="7" height="77"><svg x="0.70" y="0.30" width="4.40" height="75.20" viewBox="0 0 4.40 75.20" overflow="visible"><rect width="4.40" height="75.20" rx="0.00" fill="#265426"/></svg></svg>
<svg style="position:absolute;left:1109px;top:499px;overflow:visible" width="74" height="74"><svg x="0.90" y="0.10" width="72.00" height="72.00" viewBox="-36 -36 72 72" overflow="visible"><circle cx="0" cy="0" r="33.9" fill="none" stroke="#7e7e7e" stroke-width="1.8"/><g transform="translate(-11.6 -14.4) scale(0.58)"><g fill="none" stroke="#7d7d7d" stroke-width="2.4" stroke-linecap="round" stroke-linejoin="round" ><path d="M15 6.2 H5 Q1.4 6.2 1.4 9.8 V40.2 Q1.4 43.8 5 43.8 H15 M25 6.2 H35 Q38.6 6.2 38.6 9.8 V40.2 Q38.6 43.8 35 43.8 H25"/><path d="M20 1.2 L25.2 7 L20 12.6 L14.8 7 Z M20 37.4 L25.2 43 L20 48.8 L14.8 43 Z"/><path d="M20 12.6 V37.4"/></g><g fill="none" stroke="#7d7d7d" stroke-width="1.6" stroke-linecap="round" stroke-linejoin="round" ><path d="M1.4 20.5 Q11 24.5 18.5 22.5 M38.6 20.5 Q29 24.5 21.5 22.5 M1.4 29.5 Q11 25.5 18.5 27.5 M38.6 29.5 Q29 25.5 21.5 27.5"/><path d="M12.5 6.5 Q12.5 16 19 20 M27.5 6.5 Q27.5 16 21 20 M12.5 43.5 Q12.5 34 19 30 M27.5 43.5 Q27.5 34 21 30"/></g></g></svg></svg>
<div class="t" id="c1n" style="left:1185.1px;top:495.3px;font-size:20.5px;line-height:20.5px;color:#7d7d7d;-webkit-text-stroke:0.5px #7d7d7d;letter-spacing:0.96px;">Zain KSA</div>
<svg style="position:absolute;left:1212px;top:536px;overflow:visible" width="95" height="41"><svg x="0.10" y="0.80" width="93.20" height="38.80" viewBox="0 0 93.20 38.80" overflow="visible"><rect x="0.72" y="0.72" width="91.75" height="37.35" rx="18.67" fill="none" stroke="#7e7e7e" stroke-width="1.45"/></svg></svg>
<svg style="position:absolute;left:1268px;top:537px;overflow:visible" width="39" height="39"><svg x="0.10" y="0.50" width="37.20" height="37.20" viewBox="0 0 37.20 37.20" overflow="visible"><rect width="37.20" height="37.20" rx="18.60" fill="#7b7b7b"/></svg></svg>
<div class="t" id="c1a" style="left:1226.7px;top:545.4px;font-size:17.7px;line-height:17.7px;color:#7d7d7d;-webkit-text-stroke:0.3px #7d7d7d;transform-origin:0 50%;transform:scaleX(1.057);">0</div>
<div class="t" id="c1s" style="left:1249.9px;top:545.4px;font-size:17.7px;line-height:17.7px;color:#7d7d7d;-webkit-text-stroke:0.3px #7d7d7d;transform-origin:0 50%;transform:scaleX(1.382);">/</div>
<div class="t" id="c1m" style="left:1281.1px;top:547.4px;font-size:18.5px;line-height:18.5px;color:#032a30;-webkit-text-stroke:0.5px #032a30;transform-origin:0 50%;transform:scaleX(1.088);">4</div>
<svg style="position:absolute;left:1364px;top:536px;overflow:visible" width="95" height="41"><svg x="0.50" y="0.80" width="93.20" height="38.80" viewBox="0 0 93.20 38.80" overflow="visible"><rect x="0.72" y="0.72" width="91.75" height="37.35" rx="18.67" fill="none" stroke="#7e7e7e" stroke-width="1.45"/></svg></svg>
<svg style="position:absolute;left:1420px;top:537px;overflow:visible" width="39" height="39"><svg x="0.50" y="0.50" width="37.20" height="37.20" viewBox="0 0 37.20 37.20" overflow="visible"><rect width="37.20" height="37.20" rx="18.60" fill="#7b7b7b"/></svg></svg>
<div class="t" id="c1h" style="left:1379.1px;top:545.4px;font-size:17.7px;line-height:17.7px;color:#7d7d7d;-webkit-text-stroke:0.3px #7d7d7d;transform-origin:0 50%;transform:scaleX(1.057);">0</div>
<svg style="position:absolute;left:1424px;top:541px;overflow:visible" width="32" height="32"><svg x="0.10" y="0.10" width="30.00" height="30.00" viewBox="-15 -15 30 30" overflow="visible"><g fill="none" stroke="#032a30" stroke-width="1.25" stroke-linecap="round" stroke-linejoin="round" ><circle cx="-8.6" cy="-4.4" r="3.4"/><circle cx="8.6" cy="-4.4" r="3.4"/><path d="M-13 11.4 V3.6 Q-13 -0.4 -9 -0.4 H-7.6 L-1.4 -6.6 Q0 -7.6 0.8 -6.4 Q1.4 -5.4 0.4 -4.2 L-4.2 1.6 V11.4 Z"/><path d="M13 11.4 V3.6 Q13 -0.4 9 -0.4 H7.6 L1.4 -6.6 M4.2 1.6 V11.4 H13"/><path d="M4.2 1.6 L0.6 -3"/><path d="M0 -10.4 V-13.6 M-3.4 -9.6 L-5 -12 M3.4 -9.6 L5 -12"/></g></svg></svg>
<svg style="position:absolute;left:1516px;top:536px;overflow:visible" width="96" height="41"><svg x="0.80" y="0.80" width="93.20" height="38.80" viewBox="0 0 93.20 38.80" overflow="visible"><rect x="0.72" y="0.72" width="91.75" height="37.35" rx="18.67" fill="none" stroke="#7e7e7e" stroke-width="1.45"/></svg></svg>
<svg style="position:absolute;left:1572px;top:537px;overflow:visible" width="40" height="39"><svg x="0.80" y="0.50" width="37.20" height="37.20" viewBox="0 0 37.20 37.20" overflow="visible"><rect width="37.20" height="37.20" rx="18.60" fill="#7b7b7b"/></svg></svg>
<div class="t" id="c1e" style="left:1531.4px;top:545.4px;font-size:17.7px;line-height:17.7px;color:#7d7d7d;-webkit-text-stroke:0.3px #7d7d7d;transform-origin:0 50%;transform:scaleX(1.057);">0</div>
<svg style="position:absolute;left:1576px;top:541px;overflow:visible" width="32" height="32"><svg x="0.40" y="0.10" width="30.00" height="30.00" viewBox="-15 -15 30 30" overflow="visible"><g fill="none" stroke="#032a30" stroke-width="1.4" stroke-linecap="round" stroke-linejoin="round" ><path d="M-12.8 0 Q-6 -8.2 0 -8.2 Q6 -8.2 12.8 0 Q6 8.2 0 8.2 Q-6 8.2 -12.8 0 Z"/><circle cx="0" cy="0" r="3.4"/></g></svg></svg>
<svg style="position:absolute;left:1573px;top:492px;overflow:visible" width="35" height="37"><svg x="0.00" y="0.00" width="33.60" height="35.80" viewBox="0 0 33.60 35.80" overflow="visible"><rect width="33.60" height="35.80" rx="7.00" fill="#7a7a7a"/></svg></svg>
<div class="t" id="c1b" style="left:1579.6px;top:498.9px;font-size:18.2px;line-height:18.2px;color:#032a30;-webkit-text-stroke:0.5px #032a30;letter-spacing:0.17px;">51</div>
<svg style="position:absolute;left:1615px;top:496px;overflow:visible" width="32" height="29"><svg x="0.20" y="0.80" width="30.60" height="26.60" viewBox="0 0 31 27" overflow="visible"><g fill="none" stroke="#7e7e7e" stroke-width="1.5" stroke-linecap="round" stroke-linejoin="round" ><path d="M4 1 H27 Q30 1 30 4 V18.6 Q30 21.6 27 21.6 H10.6 L4.6 26.4 L5.4 21.6 H4 Q1 21.6 1 18.6 V4 Q1 1 4 1 Z"/></g><g fill="#7e7e7e"><circle cx="8.8" cy="11.4" r="1.5"/><circle cx="15.5" cy="11.4" r="1.5"/><circle cx="22.2" cy="11.4" r="1.5"/></g></svg></svg>
<svg style="position:absolute;left:1653px;top:508px;overflow:visible" width="62" height="55"><svg x="0.50" y="0.40" width="59.60" height="53.20" viewBox="0 0 59.60 53.20" overflow="visible"><rect width="59.60" height="53.20" rx="5.00" fill="#787333"/></svg></svg>
<svg style="position:absolute;left:1719px;top:508px;overflow:visible" width="61" height="55"><svg x="0.20" y="0.40" width="59.00" height="53.20" viewBox="0 0 59.00 53.20" overflow="visible"><rect width="59.00" height="53.20" rx="5.00" fill="#4b0a0a"/></svg></svg>
<div class="t" id="c1y" style="left:1658.8px;top:520.8px;font-size:26.4px;line-height:26.4px;color:#032a30;-webkit-text-stroke:0.25px #032a30;letter-spacing:1.50px;transform-origin:0 50%;transform:scaleX(1.037);">045</div>
<div class="t" id="c1r" style="left:1724.2px;top:520.8px;font-size:26.4px;line-height:26.4px;color:#888888;-webkit-text-stroke:0.25px #888888;letter-spacing:1.50px;transform-origin:0 50%;transform:scaleX(1.037);">050</div>
<svg style="position:absolute;left:403px;top:593px;overflow:visible" width="688" height="102"><svg x="0.00" y="0.80" width="686.60" height="99.70" viewBox="0 0 686.60 99.70" overflow="visible"><rect x="0.72" y="0.72" width="685.15" height="98.25" rx="7.78" fill="none" stroke="#7e7e7e" stroke-width="1.45"/></svg></svg>
<svg style="position:absolute;left:407px;top:606px;overflow:visible" width="6" height="77"><svg x="0.50" y="0.30" width="4.40" height="75.20" viewBox="0 0 4.40 75.20" overflow="visible"><rect width="4.40" height="75.20" rx="0.00" fill="#265426"/></svg></svg>
<svg style="position:absolute;left:416px;top:608px;overflow:visible" width="74" height="74"><svg x="0.70" y="0.10" width="72.00" height="72.00" viewBox="-36 -36 72 72" overflow="visible"><circle cx="0" cy="0" r="33.9" fill="none" stroke="#7e7e7e" stroke-width="1.8"/><g transform="translate(-11.6 -14.4) scale(0.58)"><g fill="none" stroke="#7d7d7d" stroke-width="2.4" stroke-linecap="round" stroke-linejoin="round" ><path d="M15 6.2 H5 Q1.4 6.2 1.4 9.8 V40.2 Q1.4 43.8 5 43.8 H15 M25 6.2 H35 Q38.6 6.2 38.6 9.8 V40.2 Q38.6 43.8 35 43.8 H25"/><path d="M20 1.2 L25.2 7 L20 12.6 L14.8 7 Z M20 37.4 L25.2 43 L20 48.8 L14.8 43 Z"/><path d="M20 12.6 V37.4"/></g><g fill="none" stroke="#7d7d7d" stroke-width="1.6" stroke-linecap="round" stroke-linejoin="round" ><path d="M1.4 20.5 Q11 24.5 18.5 22.5 M38.6 20.5 Q29 24.5 21.5 22.5 M1.4 29.5 Q11 25.5 18.5 27.5 M38.6 29.5 Q29 25.5 21.5 27.5"/><path d="M12.5 6.5 Q12.5 16 19 20 M27.5 6.5 Q27.5 16 21 20 M12.5 43.5 Q12.5 34 19 30 M27.5 43.5 Q27.5 34 21 30"/></g></g></svg></svg>
<div class="t" id="c2n" style="left:491.9px;top:604.3px;font-size:20.5px;line-height:20.5px;color:#7d7d7d;-webkit-text-stroke:0.5px #7d7d7d;letter-spacing:1.42px;">Zain Iraq</div>
<svg style="position:absolute;left:518px;top:645px;overflow:visible" width="96" height="41"><svg x="0.90" y="0.80" width="93.20" height="38.80" viewBox="0 0 93.20 38.80" overflow="visible"><rect x="0.72" y="0.72" width="91.75" height="37.35" rx="18.67" fill="none" stroke="#7e7e7e" stroke-width="1.45"/></svg></svg>
<svg style="position:absolute;left:574px;top:646px;overflow:visible" width="40" height="39"><svg x="0.90" y="0.50" width="37.20" height="37.20" viewBox="0 0 37.20 37.20" overflow="visible"><rect width="37.20" height="37.20" rx="18.60" fill="#7b7b7b"/></svg></svg>
<div class="t" id="c2a" style="left:533.5px;top:654.4px;font-size:17.7px;line-height:17.7px;color:#7d7d7d;-webkit-text-stroke:0.3px #7d7d7d;transform-origin:0 50%;transform:scaleX(1.057);">0</div>
<div class="t" id="c2s" style="left:556.7px;top:654.4px;font-size:17.7px;line-height:17.7px;color:#7d7d7d;-webkit-text-stroke:0.3px #7d7d7d;transform-origin:0 50%;transform:scaleX(1.382);">/</div>
<div class="t" id="c2m" style="left:587.9px;top:656.4px;font-size:18.5px;line-height:18.5px;color:#032a30;-webkit-text-stroke:0.5px #032a30;transform-origin:0 50%;transform:scaleX(1.088);">4</div>
<svg style="position:absolute;left:671px;top:645px;overflow:visible" width="95" height="41"><svg x="0.30" y="0.80" width="93.20" height="38.80" viewBox="0 0 93.20 38.80" overflow="visible"><rect x="0.72" y="0.72" width="91.75" height="37.35" rx="18.67" fill="none" stroke="#7e7e7e" stroke-width="1.45"/></svg></svg>
<svg style="position:absolute;left:727px;top:646px;overflow:visible" width="39" height="39"><svg x="0.30" y="0.50" width="37.20" height="37.20" viewBox="0 0 37.20 37.20" overflow="visible"><rect width="37.20" height="37.20" rx="18.60" fill="#7b7b7b"/></svg></svg>
<div class="t" id="c2h" style="left:685.9px;top:654.4px;font-size:17.7px;line-height:17.7px;color:#7d7d7d;-webkit-text-stroke:0.3px #7d7d7d;transform-origin:0 50%;transform:scaleX(1.057);">0</div>
<svg style="position:absolute;left:730px;top:650px;overflow:visible" width="32" height="32"><svg x="0.90" y="0.10" width="30.00" height="30.00" viewBox="-15 -15 30 30" overflow="visible"><g fill="none" stroke="#032a30" stroke-width="1.25" stroke-linecap="round" stroke-linejoin="round" ><circle cx="-8.6" cy="-4.4" r="3.4"/><circle cx="8.6" cy="-4.4" r="3.4"/><path d="M-13 11.4 V3.6 Q-13 -0.4 -9 -0.4 H-7.6 L-1.4 -6.6 Q0 -7.6 0.8 -6.4 Q1.4 -5.4 0.4 -4.2 L-4.2 1.6 V11.4 Z"/><path d="M13 11.4 V3.6 Q13 -0.4 9 -0.4 H7.6 L1.4 -6.6 M4.2 1.6 V11.4 H13"/><path d="M4.2 1.6 L0.6 -3"/><path d="M0 -10.4 V-13.6 M-3.4 -9.6 L-5 -12 M3.4 -9.6 L5 -12"/></g></svg></svg>
<svg style="position:absolute;left:823px;top:645px;overflow:visible" width="95" height="41"><svg x="0.60" y="0.80" width="93.20" height="38.80" viewBox="0 0 93.20 38.80" overflow="visible"><rect x="0.72" y="0.72" width="91.75" height="37.35" rx="18.67" fill="none" stroke="#7e7e7e" stroke-width="1.45"/></svg></svg>
<svg style="position:absolute;left:879px;top:646px;overflow:visible" width="39" height="39"><svg x="0.60" y="0.50" width="37.20" height="37.20" viewBox="0 0 37.20 37.20" overflow="visible"><rect width="37.20" height="37.20" rx="18.60" fill="#7b7b7b"/></svg></svg>
<div class="t" id="c2e" style="left:838.2px;top:654.4px;font-size:17.7px;line-height:17.7px;color:#7d7d7d;-webkit-text-stroke:0.3px #7d7d7d;transform-origin:0 50%;transform:scaleX(1.057);">0</div>
<svg style="position:absolute;left:883px;top:650px;overflow:visible" width="32" height="32"><svg x="0.20" y="0.10" width="30.00" height="30.00" viewBox="-15 -15 30 30" overflow="visible"><g fill="none" stroke="#032a30" stroke-width="1.4" stroke-linecap="round" stroke-linejoin="round" ><path d="M-12.8 0 Q-6 -8.2 0 -8.2 Q6 -8.2 12.8 0 Q6 8.2 0 8.2 Q-6 8.2 -12.8 0 Z"/><circle cx="0" cy="0" r="3.4"/></g></svg></svg>
<svg style="position:absolute;left:869px;top:601px;overflow:visible" width="46" height="37"><svg x="0.40" y="0.00" width="44.00" height="35.80" viewBox="0 0 44.00 35.80" overflow="visible"><rect width="44.00" height="35.80" rx="7.00" fill="#7a7a7a"/></svg></svg>
<div class="t" id="c2b" style="left:876.4px;top:607.9px;font-size:18.2px;line-height:18.2px;color:#032a30;-webkit-text-stroke:0.5px #032a30;letter-spacing:-0.18px;">101</div>
<svg style="position:absolute;left:922px;top:605px;overflow:visible" width="32" height="29"><svg x="0.00" y="0.80" width="30.60" height="26.60" viewBox="0 0 31 27" overflow="visible"><g fill="none" stroke="#7e7e7e" stroke-width="1.5" stroke-linecap="round" stroke-linejoin="round" ><path d="M4 1 H27 Q30 1 30 4 V18.6 Q30 21.6 27 21.6 H10.6 L4.6 26.4 L5.4 21.6 H4 Q1 21.6 1 18.6 V4 Q1 1 4 1 Z"/></g><g fill="#7e7e7e"><circle cx="8.8" cy="11.4" r="1.5"/><circle cx="15.5" cy="11.4" r="1.5"/><circle cx="22.2" cy="11.4" r="1.5"/></g></svg></svg>
<svg style="position:absolute;left:960px;top:617px;overflow:visible" width="61" height="55"><svg x="0.30" y="0.40" width="59.60" height="53.20" viewBox="0 0 59.60 53.20" overflow="visible"><rect width="59.60" height="53.20" rx="5.00" fill="#787333"/></svg></svg>
<svg style="position:absolute;left:1026px;top:617px;overflow:visible" width="60" height="55"><svg x="0.00" y="0.40" width="59.00" height="53.20" viewBox="0 0 59.00 53.20" overflow="visible"><rect width="59.00" height="53.20" rx="5.00" fill="#4b0a0a"/></svg></svg>
<div class="t" id="c2y" style="left:965.6px;top:629.8px;font-size:26.4px;line-height:26.4px;color:#032a30;-webkit-text-stroke:0.25px #032a30;letter-spacing:1.50px;transform-origin:0 50%;transform:scaleX(1.037);">065</div>
<div class="t" id="c2r" style="left:1031.0px;top:629.8px;font-size:26.4px;line-height:26.4px;color:#888888;-webkit-text-stroke:0.25px #888888;letter-spacing:1.50px;transform-origin:0 50%;transform:scaleX(1.037);">076</div>
<svg style="position:absolute;left:1096px;top:593px;overflow:visible" width="688" height="102"><svg x="0.20" y="0.80" width="686.60" height="99.70" viewBox="0 0 686.60 99.70" overflow="visible"><rect x="0.72" y="0.72" width="685.15" height="98.25" rx="7.78" fill="none" stroke="#7e7e7e" stroke-width="1.45"/></svg></svg>
<svg style="position:absolute;left:1100px;top:606px;overflow:visible" width="7" height="77"><svg x="0.70" y="0.30" width="4.40" height="75.20" viewBox="0 0 4.40 75.20" overflow="visible"><rect width="4.40" height="75.20" rx="0.00" fill="#265426"/></svg></svg>
<svg style="position:absolute;left:1109px;top:608px;overflow:visible" width="74" height="74"><svg x="0.90" y="0.10" width="72.00" height="72.00" viewBox="-36 -36 72 72" overflow="visible"><circle cx="0" cy="0" r="33.9" fill="none" stroke="#7e7e7e" stroke-width="1.8"/><g transform="translate(-11.6 -14.4) scale(0.58)"><g fill="none" stroke="#7d7d7d" stroke-width="2.4" stroke-linecap="round" stroke-linejoin="round" ><path d="M15 6.2 H5 Q1.4 6.2 1.4 9.8 V40.2 Q1.4 43.8 5 43.8 H15 M25 6.2 H35 Q38.6 6.2 38.6 9.8 V40.2 Q38.6 43.8 35 43.8 H25"/><path d="M20 1.2 L25.2 7 L20 12.6 L14.8 7 Z M20 37.4 L25.2 43 L20 48.8 L14.8 43 Z"/><path d="M20 12.6 V37.4"/></g><g fill="none" stroke="#7d7d7d" stroke-width="1.6" stroke-linecap="round" stroke-linejoin="round" ><path d="M1.4 20.5 Q11 24.5 18.5 22.5 M38.6 20.5 Q29 24.5 21.5 22.5 M1.4 29.5 Q11 25.5 18.5 27.5 M38.6 29.5 Q29 25.5 21.5 27.5"/><path d="M12.5 6.5 Q12.5 16 19 20 M27.5 6.5 Q27.5 16 21 20 M12.5 43.5 Q12.5 34 19 30 M27.5 43.5 Q27.5 34 21 30"/></g></g></svg></svg>
<div class="t" id="c3n" style="left:1185.1px;top:604.3px;font-size:20.5px;line-height:20.5px;color:#7d7d7d;-webkit-text-stroke:0.5px #7d7d7d;letter-spacing:1.49px;">Zain Bahrain</div>
<svg style="position:absolute;left:1212px;top:645px;overflow:visible" width="95" height="41"><svg x="0.10" y="0.80" width="93.20" height="38.80" viewBox="0 0 93.20 38.80" overflow="visible"><rect x="0.72" y="0.72" width="91.75" height="37.35" rx="18.67" fill="none" stroke="#7e7e7e" stroke-width="1.45"/></svg></svg>
<svg style="position:absolute;left:1268px;top:646px;overflow:visible" width="39" height="39"><svg x="0.10" y="0.50" width="37.20" height="37.20" viewBox="0 0 37.20 37.20" overflow="visible"><rect width="37.20" height="37.20" rx="18.60" fill="#7b7b7b"/></svg></svg>
<div class="t" id="c3a" style="left:1226.7px;top:654.4px;font-size:17.7px;line-height:17.7px;color:#7d7d7d;-webkit-text-stroke:0.3px #7d7d7d;transform-origin:0 50%;transform:scaleX(1.057);">0</div>
<div class="t" id="c3s" style="left:1249.9px;top:654.4px;font-size:17.7px;line-height:17.7px;color:#7d7d7d;-webkit-text-stroke:0.3px #7d7d7d;transform-origin:0 50%;transform:scaleX(1.382);">/</div>
<div class="t" id="c3m" style="left:1281.1px;top:656.4px;font-size:18.5px;line-height:18.5px;color:#032a30;-webkit-text-stroke:0.5px #032a30;transform-origin:0 50%;transform:scaleX(1.088);">6</div>
<svg style="position:absolute;left:1364px;top:645px;overflow:visible" width="95" height="41"><svg x="0.50" y="0.80" width="93.20" height="38.80" viewBox="0 0 93.20 38.80" overflow="visible"><rect x="0.72" y="0.72" width="91.75" height="37.35" rx="18.67" fill="none" stroke="#7e7e7e" stroke-width="1.45"/></svg></svg>
<svg style="position:absolute;left:1420px;top:646px;overflow:visible" width="39" height="39"><svg x="0.50" y="0.50" width="37.20" height="37.20" viewBox="0 0 37.20 37.20" overflow="visible"><rect width="37.20" height="37.20" rx="18.60" fill="#7b7b7b"/></svg></svg>
<div class="t" id="c3h" style="left:1379.1px;top:654.4px;font-size:17.7px;line-height:17.7px;color:#7d7d7d;-webkit-text-stroke:0.3px #7d7d7d;transform-origin:0 50%;transform:scaleX(1.057);">0</div>
<svg style="position:absolute;left:1424px;top:650px;overflow:visible" width="32" height="32"><svg x="0.10" y="0.10" width="30.00" height="30.00" viewBox="-15 -15 30 30" overflow="visible"><g fill="none" stroke="#032a30" stroke-width="1.25" stroke-linecap="round" stroke-linejoin="round" ><circle cx="-8.6" cy="-4.4" r="3.4"/><circle cx="8.6" cy="-4.4" r="3.4"/><path d="M-13 11.4 V3.6 Q-13 -0.4 -9 -0.4 H-7.6 L-1.4 -6.6 Q0 -7.6 0.8 -6.4 Q1.4 -5.4 0.4 -4.2 L-4.2 1.6 V11.4 Z"/><path d="M13 11.4 V3.6 Q13 -0.4 9 -0.4 H7.6 L1.4 -6.6 M4.2 1.6 V11.4 H13"/><path d="M4.2 1.6 L0.6 -3"/><path d="M0 -10.4 V-13.6 M-3.4 -9.6 L-5 -12 M3.4 -9.6 L5 -12"/></g></svg></svg>
<svg style="position:absolute;left:1516px;top:645px;overflow:visible" width="96" height="41"><svg x="0.80" y="0.80" width="93.20" height="38.80" viewBox="0 0 93.20 38.80" overflow="visible"><rect x="0.72" y="0.72" width="91.75" height="37.35" rx="18.67" fill="none" stroke="#7e7e7e" stroke-width="1.45"/></svg></svg>
<svg style="position:absolute;left:1572px;top:646px;overflow:visible" width="40" height="39"><svg x="0.80" y="0.50" width="37.20" height="37.20" viewBox="0 0 37.20 37.20" overflow="visible"><rect width="37.20" height="37.20" rx="18.60" fill="#7b7b7b"/></svg></svg>
<div class="t" id="c3e" style="left:1531.4px;top:654.4px;font-size:17.7px;line-height:17.7px;color:#7d7d7d;-webkit-text-stroke:0.3px #7d7d7d;transform-origin:0 50%;transform:scaleX(1.057);">1</div>
<svg style="position:absolute;left:1576px;top:650px;overflow:visible" width="32" height="32"><svg x="0.40" y="0.10" width="30.00" height="30.00" viewBox="-15 -15 30 30" overflow="visible"><g fill="none" stroke="#032a30" stroke-width="1.4" stroke-linecap="round" stroke-linejoin="round" ><path d="M-12.8 0 Q-6 -8.2 0 -8.2 Q6 -8.2 12.8 0 Q6 8.2 0 8.2 Q-6 8.2 -12.8 0 Z"/><circle cx="0" cy="0" r="3.4"/></g></svg></svg>
<svg style="position:absolute;left:1573px;top:601px;overflow:visible" width="35" height="37"><svg x="0.00" y="0.00" width="33.60" height="35.80" viewBox="0 0 33.60 35.80" overflow="visible"><rect width="33.60" height="35.80" rx="7.00" fill="#7a7a7a"/></svg></svg>
<div class="t" id="c3b" style="left:1579.6px;top:607.9px;font-size:18.2px;line-height:18.2px;color:#032a30;-webkit-text-stroke:0.5px #032a30;letter-spacing:0.17px;">51</div>
<svg style="position:absolute;left:1615px;top:605px;overflow:visible" width="32" height="29"><svg x="0.20" y="0.80" width="30.60" height="26.60" viewBox="0 0 31 27" overflow="visible"><g fill="none" stroke="#7e7e7e" stroke-width="1.5" stroke-linecap="round" stroke-linejoin="round" ><path d="M4 1 H27 Q30 1 30 4 V18.6 Q30 21.6 27 21.6 H10.6 L4.6 26.4 L5.4 21.6 H4 Q1 21.6 1 18.6 V4 Q1 1 4 1 Z"/></g><g fill="#7e7e7e"><circle cx="8.8" cy="11.4" r="1.5"/><circle cx="15.5" cy="11.4" r="1.5"/><circle cx="22.2" cy="11.4" r="1.5"/></g></svg></svg>
<svg style="position:absolute;left:1653px;top:617px;overflow:visible" width="62" height="55"><svg x="0.50" y="0.40" width="59.60" height="53.20" viewBox="0 0 59.60 53.20" overflow="visible"><rect width="59.60" height="53.20" rx="5.00" fill="#787333"/></svg></svg>
<svg style="position:absolute;left:1719px;top:617px;overflow:visible" width="61" height="55"><svg x="0.20" y="0.40" width="59.00" height="53.20" viewBox="0 0 59.00 53.20" overflow="visible"><rect width="59.00" height="53.20" rx="5.00" fill="#4b0a0a"/></svg></svg>
<div class="t" id="c3y" style="left:1658.8px;top:629.8px;font-size:26.4px;line-height:26.4px;color:#032a30;-webkit-text-stroke:0.25px #032a30;letter-spacing:1.50px;transform-origin:0 50%;transform:scaleX(1.037);">010</div>
<div class="t" id="c3r" style="left:1724.2px;top:629.8px;font-size:26.4px;line-height:26.4px;color:#888888;-webkit-text-stroke:0.25px #888888;letter-spacing:1.50px;transform-origin:0 50%;transform:scaleX(1.037);">005</div>
<svg style="position:absolute;left:403px;top:702px;overflow:visible" width="688" height="102"><svg x="0.00" y="0.80" width="686.60" height="99.70" viewBox="0 0 686.60 99.70" overflow="visible"><rect x="0.72" y="0.72" width="685.15" height="98.25" rx="7.78" fill="none" stroke="#7e7e7e" stroke-width="1.45"/></svg></svg>
<svg style="position:absolute;left:407px;top:715px;overflow:visible" width="6" height="77"><svg x="0.50" y="0.30" width="4.40" height="75.20" viewBox="0 0 4.40 75.20" overflow="visible"><rect width="4.40" height="75.20" rx="0.00" fill="#265426"/></svg></svg>
<svg style="position:absolute;left:416px;top:717px;overflow:visible" width="74" height="74"><svg x="0.70" y="0.10" width="72.00" height="72.00" viewBox="-36 -36 72 72" overflow="visible"><circle cx="0" cy="0" r="33.9" fill="none" stroke="#7e7e7e" stroke-width="1.8"/><g transform="translate(-11.6 -14.4) scale(0.58)"><g fill="none" stroke="#7d7d7d" stroke-width="2.4" stroke-linecap="round" stroke-linejoin="round" ><path d="M15 6.2 H5 Q1.4 6.2 1.4 9.8 V40.2 Q1.4 43.8 5 43.8 H15 M25 6.2 H35 Q38.6 6.2 38.6 9.8 V40.2 Q38.6 43.8 35 43.8 H25"/><path d="M20 1.2 L25.2 7 L20 12.6 L14.8 7 Z M20 37.4 L25.2 43 L20 48.8 L14.8 43 Z"/><path d="M20 12.6 V37.4"/></g><g fill="none" stroke="#7d7d7d" stroke-width="1.6" stroke-linecap="round" stroke-linejoin="round" ><path d="M1.4 20.5 Q11 24.5 18.5 22.5 M38.6 20.5 Q29 24.5 21.5 22.5 M1.4 29.5 Q11 25.5 18.5 27.5 M38.6 29.5 Q29 25.5 21.5 27.5"/><path d="M12.5 6.5 Q12.5 16 19 20 M27.5 6.5 Q27.5 16 21 20 M12.5 43.5 Q12.5 34 19 30 M27.5 43.5 Q27.5 34 21 30"/></g></g></svg></svg>
<div class="t" id="c4n" style="left:491.9px;top:713.3px;font-size:20.5px;line-height:20.5px;color:#7d7d7d;-webkit-text-stroke:0.5px #7d7d7d;letter-spacing:1.50px;transform-origin:0 50%;transform:scaleX(1.011);">Zain Kuwait</div>
<svg style="position:absolute;left:518px;top:754px;overflow:visible" width="96" height="41"><svg x="0.90" y="0.80" width="93.20" height="38.80" viewBox="0 0 93.20 38.80" overflow="visible"><rect x="0.72" y="0.72" width="91.75" height="37.35" rx="18.67" fill="none" stroke="#7e7e7e" stroke-width="1.45"/></svg></svg>
<svg style="position:absolute;left:574px;top:755px;overflow:visible" width="40" height="39"><svg x="0.90" y="0.50" width="37.20" height="37.20" viewBox="0 0 37.20 37.20" overflow="visible"><rect width="37.20" height="37.20" rx="18.60" fill="#7b7b7b"/></svg></svg>
<div class="t" id="c4a" style="left:533.5px;top:763.4px;font-size:17.7px;line-height:17.7px;color:#7d7d7d;-webkit-text-stroke:0.3px #7d7d7d;transform-origin:0 50%;transform:scaleX(1.057);">0</div>
<div class="t" id="c4s" style="left:556.7px;top:763.4px;font-size:17.7px;line-height:17.7px;color:#7d7d7d;-webkit-text-stroke:0.3px #7d7d7d;transform-origin:0 50%;transform:scaleX(1.382);">/</div>
<div class="t" id="c4m" style="left:587.9px;top:765.4px;font-size:18.5px;line-height:18.5px;color:#032a30;-webkit-text-stroke:0.5px #032a30;transform-origin:0 50%;transform:scaleX(1.088);">6</div>
<svg style="position:absolute;left:671px;top:754px;overflow:visible" width="95" height="41"><svg x="0.30" y="0.80" width="93.20" height="38.80" viewBox="0 0 93.20 38.80" overflow="visible"><rect x="0.72" y="0.72" width="91.75" height="37.35" rx="18.67" fill="none" stroke="#7e7e7e" stroke-width="1.45"/></svg></svg>
<svg style="position:absolute;left:727px;top:755px;overflow:visible" width="39" height="39"><svg x="0.30" y="0.50" width="37.20" height="37.20" viewBox="0 0 37.20 37.20" overflow="visible"><rect width="37.20" height="37.20" rx="18.60" fill="#7b7b7b"/></svg></svg>
<div class="t" id="c4h" style="left:685.9px;top:763.4px;font-size:17.7px;line-height:17.7px;color:#7d7d7d;-webkit-text-stroke:0.3px #7d7d7d;transform-origin:0 50%;transform:scaleX(1.057);">0</div>
<svg style="position:absolute;left:730px;top:759px;overflow:visible" width="32" height="32"><svg x="0.90" y="0.10" width="30.00" height="30.00" viewBox="-15 -15 30 30" overflow="visible"><g fill="none" stroke="#032a30" stroke-width="1.25" stroke-linecap="round" stroke-linejoin="round" ><circle cx="-8.6" cy="-4.4" r="3.4"/><circle cx="8.6" cy="-4.4" r="3.4"/><path d="M-13 11.4 V3.6 Q-13 -0.4 -9 -0.4 H-7.6 L-1.4 -6.6 Q0 -7.6 0.8 -6.4 Q1.4 -5.4 0.4 -4.2 L-4.2 1.6 V11.4 Z"/><path d="M13 11.4 V3.6 Q13 -0.4 9 -0.4 H7.6 L1.4 -6.6 M4.2 1.6 V11.4 H13"/><path d="M4.2 1.6 L0.6 -3"/><path d="M0 -10.4 V-13.6 M-3.4 -9.6 L-5 -12 M3.4 -9.6 L5 -12"/></g></svg></svg>
<svg style="position:absolute;left:823px;top:754px;overflow:visible" width="95" height="41"><svg x="0.60" y="0.80" width="93.20" height="38.80" viewBox="0 0 93.20 38.80" overflow="visible"><rect x="0.72" y="0.72" width="91.75" height="37.35" rx="18.67" fill="none" stroke="#7e7e7e" stroke-width="1.45"/></svg></svg>
<svg style="position:absolute;left:879px;top:755px;overflow:visible" width="39" height="39"><svg x="0.60" y="0.50" width="37.20" height="37.20" viewBox="0 0 37.20 37.20" overflow="visible"><rect width="37.20" height="37.20" rx="18.60" fill="#7b7b7b"/></svg></svg>
<div class="t" id="c4e" style="left:838.2px;top:763.4px;font-size:17.7px;line-height:17.7px;color:#7d7d7d;-webkit-text-stroke:0.3px #7d7d7d;transform-origin:0 50%;transform:scaleX(1.057);">0</div>
<svg style="position:absolute;left:883px;top:759px;overflow:visible" width="32" height="32"><svg x="0.20" y="0.10" width="30.00" height="30.00" viewBox="-15 -15 30 30" overflow="visible"><g fill="none" stroke="#032a30" stroke-width="1.4" stroke-linecap="round" stroke-linejoin="round" ><path d="M-12.8 0 Q-6 -8.2 0 -8.2 Q6 -8.2 12.8 0 Q6 8.2 0 8.2 Q-6 8.2 -12.8 0 Z"/><circle cx="0" cy="0" r="3.4"/></g></svg></svg>
<svg style="position:absolute;left:869px;top:710px;overflow:visible" width="46" height="37"><svg x="0.40" y="0.00" width="44.00" height="35.80" viewBox="0 0 44.00 35.80" overflow="visible"><rect width="44.00" height="35.80" rx="7.00" fill="#7a7a7a"/></svg></svg>
<div class="t" id="c4b" style="left:876.4px;top:716.9px;font-size:18.2px;line-height:18.2px;color:#032a30;-webkit-text-stroke:0.5px #032a30;letter-spacing:-0.18px;">101</div>
<svg style="position:absolute;left:922px;top:714px;overflow:visible" width="32" height="29"><svg x="0.00" y="0.80" width="30.60" height="26.60" viewBox="0 0 31 27" overflow="visible"><g fill="none" stroke="#7e7e7e" stroke-width="1.5" stroke-linecap="round" stroke-linejoin="round" ><path d="M4 1 H27 Q30 1 30 4 V18.6 Q30 21.6 27 21.6 H10.6 L4.6 26.4 L5.4 21.6 H4 Q1 21.6 1 18.6 V4 Q1 1 4 1 Z"/></g><g fill="#7e7e7e"><circle cx="8.8" cy="11.4" r="1.5"/><circle cx="15.5" cy="11.4" r="1.5"/><circle cx="22.2" cy="11.4" r="1.5"/></g></svg></svg>
<svg style="position:absolute;left:960px;top:726px;overflow:visible" width="61" height="55"><svg x="0.30" y="0.40" width="59.60" height="53.20" viewBox="0 0 59.60 53.20" overflow="visible"><rect width="59.60" height="53.20" rx="5.00" fill="#787333"/></svg></svg>
<svg style="position:absolute;left:1026px;top:726px;overflow:visible" width="60" height="55"><svg x="0.00" y="0.40" width="59.00" height="53.20" viewBox="0 0 59.00 53.20" overflow="visible"><rect width="59.00" height="53.20" rx="5.00" fill="#4b0a0a"/></svg></svg>
<div class="t" id="c4y" style="left:965.6px;top:738.8px;font-size:26.4px;line-height:26.4px;color:#032a30;-webkit-text-stroke:0.25px #032a30;letter-spacing:1.50px;transform-origin:0 50%;transform:scaleX(1.037);">095</div>
<div class="t" id="c4r" style="left:1031.0px;top:738.8px;font-size:26.4px;line-height:26.4px;color:#888888;-webkit-text-stroke:0.25px #888888;letter-spacing:1.50px;transform-origin:0 50%;transform:scaleX(1.037);">090</div>
<svg style="position:absolute;left:403px;top:891px;overflow:visible" width="688" height="102"><svg x="0.00" y="0.80" width="686.60" height="99.70" viewBox="0 0 686.60 99.70" overflow="visible"><rect x="0.72" y="0.72" width="685.15" height="98.25" rx="7.78" fill="none" stroke="#7e7e7e" stroke-width="1.45"/></svg></svg>
<svg style="position:absolute;left:407px;top:904px;overflow:visible" width="6" height="77"><svg x="0.50" y="0.30" width="4.40" height="75.20" viewBox="0 0 4.40 75.20" overflow="visible"><rect width="4.40" height="75.20" rx="0.00" fill="#265426"/></svg></svg>
<svg style="position:absolute;left:416px;top:906px;overflow:visible" width="74" height="74"><svg x="0.70" y="0.10" width="72.00" height="72.00" viewBox="-36 -36 72 72" overflow="visible"><circle cx="0" cy="0" r="33.9" fill="none" stroke="#7e7e7e" stroke-width="1.8"/><g transform="translate(-11.6 -14.4) scale(0.58)"><g fill="none" stroke="#7d7d7d" stroke-width="2.4" stroke-linecap="round" stroke-linejoin="round" ><path d="M15 6.2 H5 Q1.4 6.2 1.4 9.8 V40.2 Q1.4 43.8 5 43.8 H15 M25 6.2 H35 Q38.6 6.2 38.6 9.8 V40.2 Q38.6 43.8 35 43.8 H25"/><path d="M20 1.2 L25.2 7 L20 12.6 L14.8 7 Z M20 37.4 L25.2 43 L20 48.8 L14.8 43 Z"/><path d="M20 12.6 V37.4"/></g><g fill="none" stroke="#7d7d7d" stroke-width="1.6" stroke-linecap="round" stroke-linejoin="round" ><path d="M1.4 20.5 Q11 24.5 18.5 22.5 M38.6 20.5 Q29 24.5 21.5 22.5 M1.4 29.5 Q11 25.5 18.5 27.5 M38.6 29.5 Q29 25.5 21.5 27.5"/><path d="M12.5 6.5 Q12.5 16 19 20 M27.5 6.5 Q27.5 16 21 20 M12.5 43.5 Q12.5 34 19 30 M27.5 43.5 Q27.5 34 21 30"/></g></g></svg></svg>
<div class="t" id="c5n" style="left:491.9px;top:902.3px;font-size:20.5px;line-height:20.5px;color:#7d7d7d;-webkit-text-stroke:0.5px #7d7d7d;letter-spacing:0.56px;">SSYYF30</div>
<svg style="position:absolute;left:518px;top:942px;overflow:visible" width="95" height="41"><svg x="0.60" y="0.90" width="93.20" height="38.80" viewBox="0 0 93.20 38.80" overflow="visible"><rect x="0.72" y="0.72" width="91.75" height="37.35" rx="18.67" fill="none" stroke="#7e7e7e" stroke-width="1.45"/></svg></svg>
<svg style="position:absolute;left:574px;top:943px;overflow:visible" width="39" height="39"><svg x="0.60" y="0.60" width="37.20" height="37.20" viewBox="0 0 37.20 37.20" overflow="visible"><rect width="37.20" height="37.20" rx="18.60" fill="#7b7b7b"/></svg></svg>
<div class="t" id="c5a" style="left:533.2px;top:951.5px;font-size:17.7px;line-height:17.7px;color:#7d7d7d;-webkit-text-stroke:0.3px #7d7d7d;transform-origin:0 50%;transform:scaleX(1.057);">4</div>
<div class="t" id="c5s" style="left:556.4px;top:951.5px;font-size:17.7px;line-height:17.7px;color:#7d7d7d;-webkit-text-stroke:0.3px #7d7d7d;transform-origin:0 50%;transform:scaleX(1.382);">/</div>
<div class="t" id="c5m" style="left:587.6px;top:953.5px;font-size:18.5px;line-height:18.5px;color:#032a30;-webkit-text-stroke:0.5px #032a30;transform-origin:0 50%;transform:scaleX(1.088);">4</div>
<svg style="position:absolute;left:671px;top:942px;overflow:visible" width="95" height="41"><svg x="0.00" y="0.90" width="93.20" height="38.80" viewBox="0 0 93.20 38.80" overflow="visible"><rect x="0.72" y="0.72" width="91.75" height="37.35" rx="18.67" fill="none" stroke="#7e7e7e" stroke-width="1.45"/></svg></svg>
<svg style="position:absolute;left:727px;top:943px;overflow:visible" width="39" height="39"><svg x="0.00" y="0.60" width="37.20" height="37.20" viewBox="0 0 37.20 37.20" overflow="visible"><rect width="37.20" height="37.20" rx="18.60" fill="#7b7b7b"/></svg></svg>
<div class="t" id="c5h" style="left:685.6px;top:951.5px;font-size:17.7px;line-height:17.7px;color:#7d7d7d;-webkit-text-stroke:0.3px #7d7d7d;transform-origin:0 50%;transform:scaleX(1.057);">0</div>
<svg style="position:absolute;left:730px;top:947px;overflow:visible" width="32" height="32"><svg x="0.60" y="0.20" width="30.00" height="30.00" viewBox="-15 -15 30 30" overflow="visible"><g fill="none" stroke="#032a30" stroke-width="1.25" stroke-linecap="round" stroke-linejoin="round" ><circle cx="-8.6" cy="-4.4" r="3.4"/><circle cx="8.6" cy="-4.4" r="3.4"/><path d="M-13 11.4 V3.6 Q-13 -0.4 -9 -0.4 H-7.6 L-1.4 -6.6 Q0 -7.6 0.8 -6.4 Q1.4 -5.4 0.4 -4.2 L-4.2 1.6 V11.4 Z"/><path d="M13 11.4 V3.6 Q13 -0.4 9 -0.4 H7.6 L1.4 -6.6 M4.2 1.6 V11.4 H13"/><path d="M4.2 1.6 L0.6 -3"/><path d="M0 -10.4 V-13.6 M-3.4 -9.6 L-5 -12 M3.4 -9.6 L5 -12"/></g></svg></svg>
<svg style="position:absolute;left:823px;top:942px;overflow:visible" width="95" height="41"><svg x="0.30" y="0.90" width="93.20" height="38.80" viewBox="0 0 93.20 38.80" overflow="visible"><rect x="0.72" y="0.72" width="91.75" height="37.35" rx="18.67" fill="none" stroke="#7e7e7e" stroke-width="1.45"/></svg></svg>
<svg style="position:absolute;left:879px;top:943px;overflow:visible" width="39" height="39"><svg x="0.30" y="0.60" width="37.20" height="37.20" viewBox="0 0 37.20 37.20" overflow="visible"><rect width="37.20" height="37.20" rx="18.60" fill="#7b7b7b"/></svg></svg>
<div class="t" id="c5e" style="left:837.9px;top:951.5px;font-size:17.7px;line-height:17.7px;color:#7d7d7d;-webkit-text-stroke:0.3px #7d7d7d;transform-origin:0 50%;transform:scaleX(1.057);">0</div>
<svg style="position:absolute;left:882px;top:947px;overflow:visible" width="32" height="32"><svg x="0.90" y="0.20" width="30.00" height="30.00" viewBox="-15 -15 30 30" overflow="visible"><g fill="none" stroke="#032a30" stroke-width="1.4" stroke-linecap="round" stroke-linejoin="round" ><path d="M-12.8 0 Q-6 -8.2 0 -8.2 Q6 -8.2 12.8 0 Q6 8.2 0 8.2 Q-6 8.2 -12.8 0 Z"/><circle cx="0" cy="0" r="3.4"/></g></svg></svg>
<svg style="position:absolute;left:879px;top:899px;overflow:visible" width="35" height="37"><svg x="0.00" y="0.00" width="33.60" height="35.80" viewBox="0 0 33.60 35.80" overflow="visible"><rect width="33.60" height="35.80" rx="7.00" fill="#7a7a7a"/></svg></svg>
<div class="t" id="c5b" style="left:885.6px;top:905.9px;font-size:18.2px;line-height:18.2px;color:#032a30;-webkit-text-stroke:0.5px #032a30;letter-spacing:0.17px;">51</div>
<svg style="position:absolute;left:921px;top:903px;overflow:visible" width="32" height="29"><svg x="0.20" y="0.80" width="30.60" height="26.60" viewBox="0 0 31 27" overflow="visible"><g fill="none" stroke="#7e7e7e" stroke-width="1.5" stroke-linecap="round" stroke-linejoin="round" ><path d="M4 1 H27 Q30 1 30 4 V18.6 Q30 21.6 27 21.6 H10.6 L4.6 26.4 L5.4 21.6 H4 Q1 21.6 1 18.6 V4 Q1 1 4 1 Z"/></g><g fill="#7e7e7e"><circle cx="8.8" cy="11.4" r="1.5"/><circle cx="15.5" cy="11.4" r="1.5"/><circle cx="22.2" cy="11.4" r="1.5"/></g></svg></svg>
<svg style="position:absolute;left:959px;top:915px;overflow:visible" width="62" height="55"><svg x="0.50" y="0.40" width="59.60" height="53.20" viewBox="0 0 59.60 53.20" overflow="visible"><rect width="59.60" height="53.20" rx="5.00" fill="#787333"/></svg></svg>
<svg style="position:absolute;left:1025px;top:915px;overflow:visible" width="61" height="55"><svg x="0.20" y="0.40" width="59.00" height="53.20" viewBox="0 0 59.00 53.20" overflow="visible"><rect width="59.00" height="53.20" rx="5.00" fill="#4b0a0a"/></svg></svg>
<div class="t" id="c5y" style="left:964.8px;top:927.8px;font-size:26.4px;line-height:26.4px;color:#032a30;-webkit-text-stroke:0.25px #032a30;letter-spacing:1.50px;transform-origin:0 50%;transform:scaleX(1.037);">030</div>
<div class="t" id="c5r" style="left:1030.2px;top:927.8px;font-size:26.4px;line-height:26.4px;color:#888888;-webkit-text-stroke:0.25px #888888;letter-spacing:1.50px;transform-origin:0 50%;transform:scaleX(1.037);">000</div>
<svg style="position:absolute;left:1096px;top:891px;overflow:visible" width="688" height="102"><svg x="0.20" y="0.80" width="686.60" height="99.70" viewBox="0 0 686.60 99.70" overflow="visible"><rect x="0.72" y="0.72" width="685.15" height="98.25" rx="7.78" fill="none" stroke="#7e7e7e" stroke-width="1.45"/></svg></svg>
<svg style="position:absolute;left:1100px;top:904px;overflow:visible" width="7" height="77"><svg x="0.70" y="0.30" width="4.40" height="75.20" viewBox="0 0 4.40 75.20" overflow="visible"><rect width="4.40" height="75.20" rx="0.00" fill="#7a2018"/></svg></svg>
<svg style="position:absolute;left:1111.3px;top:907.5px" width="69.2" height="69.2" viewBox="-35 -35 70 70"><clipPath id="ps1145"><circle cx="0" cy="0" r="35"/></clipPath><filter id="ps1145b" x="-20%" y="-20%" width="140%" height="140%"><feGaussianBlur stdDeviation="0.8"/></filter><g clip-path="url(#ps1145)"><g filter="url(#ps1145b)"><rect x="-40" y="-40" width="80" height="80" fill="#4f7a10"/><rect x="-40" y="-40" width="80" height="33" fill="#3a434c"/><rect x="-40" y="-40" width="80" height="8" fill="#2a3036"/><rect x="-40" y="-29" width="80" height="3" fill="#5a646c"/><rect x="-40" y="-23" width="80" height="2.4" fill="#56606a"/><rect x="-40" y="-17.6" width="80" height="2" fill="#7a8690"/><rect x="-40" y="-14" width="80" height="5" fill="#4a5660"/><rect x="-40" y="-9" width="80" height="2" fill="#6e7a80"/><path d="M-40 -7 H40 V22 H-40 Z" fill="#527e10"/><path d="M-40 -7 H40 V2 H-40 Z" fill="#4a760e"/><path d="M-30 18 L-12 6" stroke="#86a060" stroke-width="0.7"/><path d="M-40 20 C-20 22 -8 24 2 26 V40 H-40 Z" fill="#3c7a34"/><path d="M-30 28 C-18 28 -8 30 0 32 V40 H-24 Z" fill="#5a707a"/><path d="M6 -26 C10 -33 22 -33 26 -22 C29 -12 31 -4 33 6 L30 16 C26 8 22 2 16 -2 L10 -4 C6 -8 4 -18 6 -26 Z" fill="#241b17"/><path d="M5 -14 C4 -8 5 -4 8 -1 L12 2 L13 -8 Z" fill="#5a4238"/><path d="M0 40 C-1 22 0 6 6 -2 C10 -5 16 -4 22 -2 C30 2 34 10 36 24 V40 Z" fill="#959190"/><path d="M9 -2 L12 5 L19 -3" stroke="#1e2422" stroke-width="1.6" fill="none"/><path d="M22 -2 L27 8 M24.6 -1 L29.4 8.6" stroke="#8a6a10" stroke-width="1.4"/><path d="M-2 18 H8 M0 21 H7" stroke="#4a4644" stroke-width="1.6"/><path d="M0 40 C-1 30 -1 20 1 12 L3 12 C2 22 2 30 3 40 Z" fill="#7a5a44"/><rect x="-40" y="-40" width="80" height="80" fill="#001416" opacity="0.3"/></g></g></svg>
<div class="t" id="c6n" style="left:1185.1px;top:902.3px;font-size:20.5px;line-height:20.5px;color:#7d7d7d;-webkit-text-stroke:0.5px #7d7d7d;letter-spacing:1.50px;transform-origin:0 50%;transform:scaleX(1.035);">DreaMma</div>
<svg style="position:absolute;left:1211px;top:942px;overflow:visible" width="96" height="41"><svg x="0.80" y="0.90" width="93.20" height="38.80" viewBox="0 0 93.20 38.80" overflow="visible"><rect x="0.72" y="0.72" width="91.75" height="37.35" rx="18.67" fill="none" stroke="#7e7e7e" stroke-width="1.45"/></svg></svg>
<svg style="position:absolute;left:1267px;top:943px;overflow:visible" width="40" height="39"><svg x="0.80" y="0.60" width="37.20" height="37.20" viewBox="0 0 37.20 37.20" overflow="visible"><rect width="37.20" height="37.20" rx="18.60" fill="#7b7b7b"/></svg></svg>
<div class="t" id="c6a" style="left:1226.4px;top:951.5px;font-size:17.7px;line-height:17.7px;color:#7d7d7d;-webkit-text-stroke:0.3px #7d7d7d;transform-origin:0 50%;transform:scaleX(1.057);">2</div>
<div class="t" id="c6s" style="left:1249.6px;top:951.5px;font-size:17.7px;line-height:17.7px;color:#7d7d7d;-webkit-text-stroke:0.3px #7d7d7d;transform-origin:0 50%;transform:scaleX(1.382);">/</div>
<div class="t" id="c6m" style="left:1280.8px;top:953.5px;font-size:18.5px;line-height:18.5px;color:#032a30;-webkit-text-stroke:0.5px #032a30;transform-origin:0 50%;transform:scaleX(1.088);">4</div>
<svg style="position:absolute;left:1364px;top:942px;overflow:visible" width="95" height="41"><svg x="0.20" y="0.90" width="93.20" height="38.80" viewBox="0 0 93.20 38.80" overflow="visible"><rect x="0.72" y="0.72" width="91.75" height="37.35" rx="18.67" fill="none" stroke="#7e7e7e" stroke-width="1.45"/></svg></svg>
<svg style="position:absolute;left:1420px;top:943px;overflow:visible" width="39" height="39"><svg x="0.20" y="0.60" width="37.20" height="37.20" viewBox="0 0 37.20 37.20" overflow="visible"><rect width="37.20" height="37.20" rx="18.60" fill="#7b7b7b"/></svg></svg>
<div class="t" id="c6h" style="left:1378.8px;top:951.5px;font-size:17.7px;line-height:17.7px;color:#7d7d7d;-webkit-text-stroke:0.3px #7d7d7d;transform-origin:0 50%;transform:scaleX(1.057);">0</div>
<svg style="position:absolute;left:1423px;top:947px;overflow:visible" width="32" height="32"><svg x="0.80" y="0.20" width="30.00" height="30.00" viewBox="-15 -15 30 30" overflow="visible"><g fill="none" stroke="#032a30" stroke-width="1.25" stroke-linecap="round" stroke-linejoin="round" ><circle cx="-8.6" cy="-4.4" r="3.4"/><circle cx="8.6" cy="-4.4" r="3.4"/><path d="M-13 11.4 V3.6 Q-13 -0.4 -9 -0.4 H-7.6 L-1.4 -6.6 Q0 -7.6 0.8 -6.4 Q1.4 -5.4 0.4 -4.2 L-4.2 1.6 V11.4 Z"/><path d="M13 11.4 V3.6 Q13 -0.4 9 -0.4 H7.6 L1.4 -6.6 M4.2 1.6 V11.4 H13"/><path d="M4.2 1.6 L0.6 -3"/><path d="M0 -10.4 V-13.6 M-3.4 -9.6 L-5 -12 M3.4 -9.6 L5 -12"/></g></svg></svg>
<svg style="position:absolute;left:1516px;top:942px;overflow:visible" width="95" height="41"><svg x="0.50" y="0.90" width="93.20" height="38.80" viewBox="0 0 93.20 38.80" overflow="visible"><rect x="0.72" y="0.72" width="91.75" height="37.35" rx="18.67" fill="none" stroke="#7e7e7e" stroke-width="1.45"/></svg></svg>
<svg style="position:absolute;left:1572px;top:943px;overflow:visible" width="39" height="39"><svg x="0.50" y="0.60" width="37.20" height="37.20" viewBox="0 0 37.20 37.20" overflow="visible"><rect width="37.20" height="37.20" rx="18.60" fill="#7b7b7b"/></svg></svg>
<div class="t" id="c6e" style="left:1531.1px;top:951.5px;font-size:17.7px;line-height:17.7px;color:#7d7d7d;-webkit-text-stroke:0.3px #7d7d7d;transform-origin:0 50%;transform:scaleX(1.057);">0</div>
<svg style="position:absolute;left:1576px;top:947px;overflow:visible" width="32" height="32"><svg x="0.10" y="0.20" width="30.00" height="30.00" viewBox="-15 -15 30 30" overflow="visible"><g fill="none" stroke="#032a30" stroke-width="1.4" stroke-linecap="round" stroke-linejoin="round" ><path d="M-12.8 0 Q-6 -8.2 0 -8.2 Q6 -8.2 12.8 0 Q6 8.2 0 8.2 Q-6 8.2 -12.8 0 Z"/><circle cx="0" cy="0" r="3.4"/></g></svg></svg>
<svg style="position:absolute;left:1572px;top:899px;overflow:visible" width="35" height="37"><svg x="0.20" y="0.00" width="33.60" height="35.80" viewBox="0 0 33.60 35.80" overflow="visible"><rect width="33.60" height="35.80" rx="7.00" fill="#7a7a7a"/></svg></svg>
<div class="t" id="c6b" style="left:1578.8px;top:905.9px;font-size:18.2px;line-height:18.2px;color:#032a30;-webkit-text-stroke:0.5px #032a30;letter-spacing:0.17px;">51</div>
<svg style="position:absolute;left:1618px;top:901px;overflow:visible" width="24" height="35"><svg x="0.40" y="0.30" width="22.00" height="33.00" viewBox="0 0 24 36" overflow="visible"><g fill="none" stroke="#7d7d7d" stroke-width="2" stroke-linecap="round" stroke-linejoin="round" ><rect x="7" y="1" width="10" height="21" rx="5"/><path d="M2 15 V17 Q2 27 12 27 Q22 27 22 17 V15 M12 27 V34 M5.6 34.6 H18.4"/></g></svg></svg>
<svg style="position:absolute;left:1652px;top:915px;overflow:visible" width="62" height="55"><svg x="0.70" y="0.40" width="59.60" height="53.20" viewBox="0 0 59.60 53.20" overflow="visible"><rect width="59.60" height="53.20" rx="5.00" fill="#787333"/></svg></svg>
<svg style="position:absolute;left:1718px;top:915px;overflow:visible" width="61" height="55"><svg x="0.40" y="0.40" width="59.00" height="53.20" viewBox="0 0 59.00 53.20" overflow="visible"><rect width="59.00" height="53.20" rx="5.00" fill="#4b0a0a"/></svg></svg>
<div class="t" id="c6y" style="left:1658.0px;top:927.8px;font-size:26.4px;line-height:26.4px;color:#032a30;-webkit-text-stroke:0.25px #032a30;letter-spacing:1.50px;transform-origin:0 50%;transform:scaleX(1.037);">006</div>
<div class="t" id="c6r" style="left:1723.4px;top:927.8px;font-size:26.4px;line-height:26.4px;color:#888888;-webkit-text-stroke:0.25px #888888;letter-spacing:1.50px;transform-origin:0 50%;transform:scaleX(1.037);">010</div>
<svg style="position:absolute;left:403px;top:1000px;overflow:visible" width="688" height="102"><svg x="0.00" y="0.60" width="686.60" height="99.70" viewBox="0 0 686.60 99.70" overflow="visible"><rect x="0.72" y="0.72" width="685.15" height="98.25" rx="7.78" fill="none" stroke="#7e7e7e" stroke-width="1.45"/></svg></svg>
<svg style="position:absolute;left:407px;top:1013px;overflow:visible" width="6" height="77"><svg x="0.50" y="0.10" width="4.40" height="75.20" viewBox="0 0 4.40 75.20" overflow="visible"><rect width="4.40" height="75.20" rx="0.00" fill="#265426"/></svg></svg>
<svg style="position:absolute;left:418.1px;top:1016.3px" width="69.2" height="69.2" viewBox="-35 -35 70 70"><clipPath id="pl452"><circle cx="0" cy="0" r="35"/></clipPath><filter id="pl452b" x="-20%" y="-20%" width="140%" height="140%"><feGaussianBlur stdDeviation="0.9"/></filter><g clip-path="url(#pl452)"><g filter="url(#pl452b)"><rect x="-40" y="-40" width="80" height="80" fill="#2f4d22"/><path d="M-40 -40 H40 V-18 C24 -22 6 -20 -8 -16 L-40 -22 Z" fill="#4f6660"/><path d="M-24 -24 L-8 -35 L2 -27 L10 -33 L24 -22 L4 -17 Z" fill="#65807a"/><path d="M4 -31 C16 -33 28 -25 40 -12 V-4 L12 -15 C6 -19 2 -25 4 -31 Z" fill="#46693a"/><path d="M6 -17 C18 -19 30 -16 40 -11 V0 C30 -7 18 -12 6 -17 Z" fill="#47701f"/><path d="M-8 -15 C4 -15 20 -10 40 0 V20 C32 30 20 38 4 40 C12 30 18 20 14 9 C10 -1 -2 -8 -8 -15 Z" fill="#48605f"/><path d="M14 14 C20 8 27 12 31 18 C27 27 19 34 9 38 C14 30 15 22 14 14 Z" fill="#71817f"/><path d="M0 32 C6 26 14 28 15 34 L9 42 H-4 Z" fill="#2c4c20"/><path d="M-40 -24 C-30 -21 -16 -17 -6 -13 C-9 -7 -15 -3 -22 -1 L-40 3 Z" fill="#1f3819"/><circle cx="-29" cy="-14" r="6.4" fill="#41691c"/><circle cx="-22" cy="-7" r="4.6" fill="#4b761e"/><circle cx="-14" cy="-5" r="4.8" fill="#4a741d"/><circle cx="-10" cy="0" r="5.6" fill="#45701c"/><circle cx="-4" cy="5" r="5.8" fill="#3f6a1a"/><circle cx="5" cy="-2" r="7" fill="#47721c"/><circle cx="9" cy="5" r="5.2" fill="#3e6a1a"/><circle cx="-6" cy="13" r="4.6" fill="#3a6419"/><circle cx="24" cy="-9" r="4" fill="#4a761f"/><circle cx="31" cy="-5" r="3.6" fill="#436e1d"/><path d="M-36 -2 L-30 -8 H-18 L-12 0 V4 H-36 Z" fill="#2c333c"/><path d="M-36 0 L-32 -4 L-28 4 H-36 Z" fill="#7e848a"/><rect x="-30" y="2" width="18" height="3" fill="#7c7c7a"/><rect x="-32" y="5" width="22" height="3" fill="#272c33"/><rect x="-28" y="8" width="14" height="5" fill="#451c18"/><path d="M-40 10 C-28 8 -12 12 -2 18 C-10 24 -18 30 -22 40 H-40 Z" fill="#36561b"/><path d="M-26 16 C-18 14 -10 18 -4 20 C-12 24 -18 28 -22 34 C-28 28 -28 22 -26 16 Z" fill="#44661f"/><path d="M-20 36 C-14 26 -4 20 4 18 C2 24 -4 32 -8 40 H-20 Z" fill="#74665a"/><rect x="-40" y="-40" width="80" height="80" fill="#001416" opacity="0.46"/></g></g></svg>
<div class="t" id="c7n" style="left:491.9px;top:1011.1px;font-size:20.5px;line-height:20.5px;color:#7d7d7d;-webkit-text-stroke:0.5px #7d7d7d;letter-spacing:1.50px;transform-origin:0 50%;transform:scaleX(1.014);">TAOOS66</div>
<svg style="position:absolute;left:518px;top:1051px;overflow:visible" width="95" height="41"><svg x="0.00" y="0.70" width="93.20" height="38.80" viewBox="0 0 93.20 38.80" overflow="visible"><rect x="0.72" y="0.72" width="91.75" height="37.35" rx="18.67" fill="none" stroke="#7e7e7e" stroke-width="1.45"/></svg></svg>
<svg style="position:absolute;left:574px;top:1052px;overflow:visible" width="39" height="39"><svg x="0.00" y="0.40" width="37.20" height="37.20" viewBox="0 0 37.20 37.20" overflow="visible"><rect width="37.20" height="37.20" rx="18.60" fill="#7b7b7b"/></svg></svg>
<div class="t" id="c7a" style="left:532.6px;top:1060.3px;font-size:17.7px;line-height:17.7px;color:#7d7d7d;-webkit-text-stroke:0.3px #7d7d7d;transform-origin:0 50%;transform:scaleX(1.057);">1</div>
<div class="t" id="c7s" style="left:555.8px;top:1060.3px;font-size:17.7px;line-height:17.7px;color:#7d7d7d;-webkit-text-stroke:0.3px #7d7d7d;transform-origin:0 50%;transform:scaleX(1.382);">/</div>
<div class="t" id="c7m" style="left:587.0px;top:1062.3px;font-size:18.5px;line-height:18.5px;color:#032a30;-webkit-text-stroke:0.5px #032a30;transform-origin:0 50%;transform:scaleX(1.088);">4</div>
<svg style="position:absolute;left:670px;top:1051px;overflow:visible" width="95" height="41"><svg x="0.40" y="0.70" width="93.20" height="38.80" viewBox="0 0 93.20 38.80" overflow="visible"><rect x="0.72" y="0.72" width="91.75" height="37.35" rx="18.67" fill="none" stroke="#7e7e7e" stroke-width="1.45"/></svg></svg>
<svg style="position:absolute;left:726px;top:1052px;overflow:visible" width="39" height="39"><svg x="0.40" y="0.40" width="37.20" height="37.20" viewBox="0 0 37.20 37.20" overflow="visible"><rect width="37.20" height="37.20" rx="18.60" fill="#7b7b7b"/></svg></svg>
<div class="t" id="c7h" style="left:685.0px;top:1060.3px;font-size:17.7px;line-height:17.7px;color:#7d7d7d;-webkit-text-stroke:0.3px #7d7d7d;transform-origin:0 50%;transform:scaleX(1.057);">0</div>
<svg style="position:absolute;left:730px;top:1056px;overflow:visible" width="31" height="31"><svg x="0.00" y="0.00" width="30.00" height="30.00" viewBox="-15 -15 30 30" overflow="visible"><g fill="none" stroke="#032a30" stroke-width="1.25" stroke-linecap="round" stroke-linejoin="round" ><circle cx="-8.6" cy="-4.4" r="3.4"/><circle cx="8.6" cy="-4.4" r="3.4"/><path d="M-13 11.4 V3.6 Q-13 -0.4 -9 -0.4 H-7.6 L-1.4 -6.6 Q0 -7.6 0.8 -6.4 Q1.4 -5.4 0.4 -4.2 L-4.2 1.6 V11.4 Z"/><path d="M13 11.4 V3.6 Q13 -0.4 9 -0.4 H7.6 L1.4 -6.6 M4.2 1.6 V11.4 H13"/><path d="M4.2 1.6 L0.6 -3"/><path d="M0 -10.4 V-13.6 M-3.4 -9.6 L-5 -12 M3.4 -9.6 L5 -12"/></g></svg></svg>
<svg style="position:absolute;left:821px;top:1051px;overflow:visible" width="96" height="41"><svg x="0.80" y="0.70" width="93.20" height="38.80" viewBox="0 0 93.20 38.80" overflow="visible"><rect x="0.72" y="0.72" width="91.75" height="37.35" rx="18.67" fill="none" stroke="#7e7e7e" stroke-width="1.45"/></svg></svg>
<svg style="position:absolute;left:877px;top:1052px;overflow:visible" width="40" height="39"><svg x="0.80" y="0.40" width="37.20" height="37.20" viewBox="0 0 37.20 37.20" overflow="visible"><rect width="37.20" height="37.20" rx="18.60" fill="#7b7b7b"/></svg></svg>
<div class="t" id="c7e" style="left:836.4px;top:1060.3px;font-size:17.7px;line-height:17.7px;color:#7d7d7d;-webkit-text-stroke:0.3px #7d7d7d;transform-origin:0 50%;transform:scaleX(1.057);">0</div>
<svg style="position:absolute;left:881px;top:1056px;overflow:visible" width="32" height="31"><svg x="0.40" y="0.00" width="30.00" height="30.00" viewBox="-15 -15 30 30" overflow="visible"><g fill="none" stroke="#032a30" stroke-width="1.4" stroke-linecap="round" stroke-linejoin="round" ><path d="M-12.8 0 Q-6 -8.2 0 -8.2 Q6 -8.2 12.8 0 Q6 8.2 0 8.2 Q-6 8.2 -12.8 0 Z"/><circle cx="0" cy="0" r="3.4"/></g></svg></svg>
<svg style="position:absolute;left:877px;top:1007px;overflow:visible" width="36" height="38"><svg x="0.60" y="0.80" width="33.60" height="35.80" viewBox="0 0 33.60 35.80" overflow="visible"><rect width="33.60" height="35.80" rx="7.00" fill="#7a7a7a"/></svg></svg>
<div class="t" id="c7b" style="left:884.2px;top:1014.7px;font-size:18.2px;line-height:18.2px;color:#032a30;-webkit-text-stroke:0.5px #032a30;letter-spacing:0.17px;">51</div>
<svg style="position:absolute;left:919px;top:1012px;overflow:visible" width="33" height="29"><svg x="0.90" y="0.60" width="30.60" height="26.60" viewBox="0 0 31 27" overflow="visible"><g fill="none" stroke="#7e7e7e" stroke-width="1.5" stroke-linecap="round" stroke-linejoin="round" ><path d="M4 1 H27 Q30 1 30 4 V18.6 Q30 21.6 27 21.6 H10.6 L4.6 26.4 L5.4 21.6 H4 Q1 21.6 1 18.6 V4 Q1 1 4 1 Z"/></g><g fill="#7e7e7e"><circle cx="8.8" cy="11.4" r="1.5"/><circle cx="15.5" cy="11.4" r="1.5"/><circle cx="22.2" cy="11.4" r="1.5"/></g></svg></svg>
<svg style="position:absolute;left:958px;top:1024px;overflow:visible" width="61" height="55"><svg x="0.20" y="0.20" width="59.60" height="53.20" viewBox="0 0 59.60 53.20" overflow="visible"><rect width="59.60" height="53.20" rx="5.00" fill="#787333"/></svg></svg>
<svg style="position:absolute;left:1023px;top:1024px;overflow:visible" width="61" height="55"><svg x="0.90" y="0.20" width="59.00" height="53.20" viewBox="0 0 59.00 53.20" overflow="visible"><rect width="59.00" height="53.20" rx="5.00" fill="#4b0a0a"/></svg></svg>
<div class="t" id="c7y" style="left:963.5px;top:1036.6px;font-size:26.4px;line-height:26.4px;color:#032a30;-webkit-text-stroke:0.25px #032a30;letter-spacing:1.50px;transform-origin:0 50%;transform:scaleX(1.037);">000</div>
<div class="t" id="c7r" style="left:1028.9px;top:1036.6px;font-size:26.4px;line-height:26.4px;color:#888888;-webkit-text-stroke:0.25px #888888;letter-spacing:1.50px;transform-origin:0 50%;transform:scaleX(1.037);">000</div>
<svg style="position:absolute;left:1096px;top:1000px;overflow:visible" width="688" height="102"><svg x="0.20" y="0.60" width="686.60" height="99.70" viewBox="0 0 686.60 99.70" overflow="visible"><rect x="0.72" y="0.72" width="685.15" height="98.25" rx="7.78" fill="none" stroke="#7e7e7e" stroke-width="1.45"/></svg></svg>
<svg style="position:absolute;left:1100px;top:1013px;overflow:visible" width="7" height="77"><svg x="0.70" y="0.10" width="4.40" height="75.20" viewBox="0 0 4.40 75.20" overflow="visible"><rect width="4.40" height="75.20" rx="0.00" fill="#7a2018"/></svg></svg>
<svg style="position:absolute;left:1109px;top:1014px;overflow:visible" width="74" height="74"><svg x="0.90" y="0.90" width="72.00" height="72.00" viewBox="-36 -36 72 72" overflow="visible"><circle cx="0" cy="0" r="33.9" fill="none" stroke="#7e7e7e" stroke-width="1.8"/><g transform="translate(-11.6 -14.4) scale(0.58)"><g fill="none" stroke="#7d7d7d" stroke-width="2.4" stroke-linecap="round" stroke-linejoin="round" ><path d="M15 6.2 H5 Q1.4 6.2 1.4 9.8 V40.2 Q1.4 43.8 5 43.8 H15 M25 6.2 H35 Q38.6 6.2 38.6 9.8 V40.2 Q38.6 43.8 35 43.8 H25"/><path d="M20 1.2 L25.2 7 L20 12.6 L14.8 7 Z M20 37.4 L25.2 43 L20 48.8 L14.8 43 Z"/><path d="M20 12.6 V37.4"/></g><g fill="none" stroke="#7d7d7d" stroke-width="1.6" stroke-linecap="round" stroke-linejoin="round" ><path d="M1.4 20.5 Q11 24.5 18.5 22.5 M38.6 20.5 Q29 24.5 21.5 22.5 M1.4 29.5 Q11 25.5 18.5 27.5 M38.6 29.5 Q29 25.5 21.5 27.5"/><path d="M12.5 6.5 Q12.5 16 19 20 M27.5 6.5 Q27.5 16 21 20 M12.5 43.5 Q12.5 34 19 30 M27.5 43.5 Q27.5 34 21 30"/></g></g></svg></svg>
<div class="t" id="c8n" style="left:1185.1px;top:1011.1px;font-size:20.5px;line-height:20.5px;color:#7d7d7d;-webkit-text-stroke:0.5px #7d7d7d;letter-spacing:1.50px;transform-origin:0 50%;transform:scaleX(1.046);">Qled</div>
<svg style="position:absolute;left:1211px;top:1051px;overflow:visible" width="95" height="41"><svg x="0.20" y="0.70" width="93.20" height="38.80" viewBox="0 0 93.20 38.80" overflow="visible"><rect x="0.72" y="0.72" width="91.75" height="37.35" rx="18.67" fill="none" stroke="#7e7e7e" stroke-width="1.45"/></svg></svg>
<svg style="position:absolute;left:1267px;top:1052px;overflow:visible" width="39" height="39"><svg x="0.20" y="0.40" width="37.20" height="37.20" viewBox="0 0 37.20 37.20" overflow="visible"><rect width="37.20" height="37.20" rx="18.60" fill="#7b7b7b"/></svg></svg>
<div class="t" id="c8a" style="left:1225.8px;top:1060.3px;font-size:17.7px;line-height:17.7px;color:#7d7d7d;-webkit-text-stroke:0.3px #7d7d7d;transform-origin:0 50%;transform:scaleX(1.057);">1</div>
<div class="t" id="c8s" style="left:1249.0px;top:1060.3px;font-size:17.7px;line-height:17.7px;color:#7d7d7d;-webkit-text-stroke:0.3px #7d7d7d;transform-origin:0 50%;transform:scaleX(1.382);">/</div>
<div class="t" id="c8m" style="left:1280.2px;top:1062.3px;font-size:18.5px;line-height:18.5px;color:#032a30;-webkit-text-stroke:0.5px #032a30;transform-origin:0 50%;transform:scaleX(1.088);">4</div>
<svg style="position:absolute;left:1363px;top:1051px;overflow:visible" width="95" height="41"><svg x="0.60" y="0.70" width="93.20" height="38.80" viewBox="0 0 93.20 38.80" overflow="visible"><rect x="0.72" y="0.72" width="91.75" height="37.35" rx="18.67" fill="none" stroke="#7e7e7e" stroke-width="1.45"/></svg></svg>
<svg style="position:absolute;left:1419px;top:1052px;overflow:visible" width="39" height="39"><svg x="0.60" y="0.40" width="37.20" height="37.20" viewBox="0 0 37.20 37.20" overflow="visible"><rect width="37.20" height="37.20" rx="18.60" fill="#7b7b7b"/></svg></svg>
<div class="t" id="c8h" style="left:1378.2px;top:1060.3px;font-size:17.7px;line-height:17.7px;color:#7d7d7d;-webkit-text-stroke:0.3px #7d7d7d;transform-origin:0 50%;transform:scaleX(1.057);">0</div>
<svg style="position:absolute;left:1423px;top:1056px;overflow:visible" width="32" height="31"><svg x="0.20" y="0.00" width="30.00" height="30.00" viewBox="-15 -15 30 30" overflow="visible"><g fill="none" stroke="#032a30" stroke-width="1.25" stroke-linecap="round" stroke-linejoin="round" ><circle cx="-8.6" cy="-4.4" r="3.4"/><circle cx="8.6" cy="-4.4" r="3.4"/><path d="M-13 11.4 V3.6 Q-13 -0.4 -9 -0.4 H-7.6 L-1.4 -6.6 Q0 -7.6 0.8 -6.4 Q1.4 -5.4 0.4 -4.2 L-4.2 1.6 V11.4 Z"/><path d="M13 11.4 V3.6 Q13 -0.4 9 -0.4 H7.6 L1.4 -6.6 M4.2 1.6 V11.4 H13"/><path d="M4.2 1.6 L0.6 -3"/><path d="M0 -10.4 V-13.6 M-3.4 -9.6 L-5 -12 M3.4 -9.6 L5 -12"/></g></svg></svg>
<svg style="position:absolute;left:1515px;top:1051px;overflow:visible" width="95" height="41"><svg x="0.00" y="0.70" width="93.20" height="38.80" viewBox="0 0 93.20 38.80" overflow="visible"><rect x="0.72" y="0.72" width="91.75" height="37.35" rx="18.67" fill="none" stroke="#7e7e7e" stroke-width="1.45"/></svg></svg>
<svg style="position:absolute;left:1571px;top:1052px;overflow:visible" width="39" height="39"><svg x="0.00" y="0.40" width="37.20" height="37.20" viewBox="0 0 37.20 37.20" overflow="visible"><rect width="37.20" height="37.20" rx="18.60" fill="#7b7b7b"/></svg></svg>
<div class="t" id="c8e" style="left:1529.6px;top:1060.3px;font-size:17.7px;line-height:17.7px;color:#7d7d7d;-webkit-text-stroke:0.3px #7d7d7d;transform-origin:0 50%;transform:scaleX(1.057);">0</div>
<svg style="position:absolute;left:1574px;top:1056px;overflow:visible" width="32" height="31"><svg x="0.60" y="0.00" width="30.00" height="30.00" viewBox="-15 -15 30 30" overflow="visible"><g fill="none" stroke="#032a30" stroke-width="1.4" stroke-linecap="round" stroke-linejoin="round" ><path d="M-12.8 0 Q-6 -8.2 0 -8.2 Q6 -8.2 12.8 0 Q6 8.2 0 8.2 Q-6 8.2 -12.8 0 Z"/><circle cx="0" cy="0" r="3.4"/></g></svg></svg>
<svg style="position:absolute;left:1570px;top:1007px;overflow:visible" width="36" height="38"><svg x="0.80" y="0.80" width="33.60" height="35.80" viewBox="0 0 33.60 35.80" overflow="visible"><rect width="33.60" height="35.80" rx="7.00" fill="#7a7a7a"/></svg></svg>
<div class="t" id="c8b" style="left:1577.4px;top:1014.7px;font-size:18.2px;line-height:18.2px;color:#032a30;-webkit-text-stroke:0.5px #032a30;letter-spacing:0.17px;">51</div>
<svg style="position:absolute;left:1613px;top:1012px;overflow:visible" width="32" height="29"><svg x="0.10" y="0.60" width="30.60" height="26.60" viewBox="0 0 31 27" overflow="visible"><g fill="none" stroke="#7e7e7e" stroke-width="1.5" stroke-linecap="round" stroke-linejoin="round" ><path d="M4 1 H27 Q30 1 30 4 V18.6 Q30 21.6 27 21.6 H10.6 L4.6 26.4 L5.4 21.6 H4 Q1 21.6 1 18.6 V4 Q1 1 4 1 Z"/></g><g fill="#7e7e7e"><circle cx="8.8" cy="11.4" r="1.5"/><circle cx="15.5" cy="11.4" r="1.5"/><circle cx="22.2" cy="11.4" r="1.5"/></g></svg></svg>
<svg style="position:absolute;left:1651px;top:1024px;overflow:visible" width="62" height="55"><svg x="0.40" y="0.20" width="59.60" height="53.20" viewBox="0 0 59.60 53.20" overflow="visible"><rect width="59.60" height="53.20" rx="5.00" fill="#787333"/></svg></svg>
<svg style="position:absolute;left:1717px;top:1024px;overflow:visible" width="61" height="55"><svg x="0.10" y="0.20" width="59.00" height="53.20" viewBox="0 0 59.00 53.20" overflow="visible"><rect width="59.00" height="53.20" rx="5.00" fill="#4b0a0a"/></svg></svg>
<div class="t" id="c8y" style="left:1656.7px;top:1036.6px;font-size:26.4px;line-height:26.4px;color:#032a30;-webkit-text-stroke:0.25px #032a30;letter-spacing:1.50px;transform-origin:0 50%;transform:scaleX(1.037);">047</div>
<div class="t" id="c8r" style="left:1722.1px;top:1036.6px;font-size:26.4px;line-height:26.4px;color:#888888;-webkit-text-stroke:0.25px #888888;letter-spacing:1.50px;transform-origin:0 50%;transform:scaleX(1.037);">026</div>
<svg style="position:absolute;left:452px;top:1321px;overflow:hidden" width="1282" height="312"><svg x="0.90" y="0.80" width="1280.10" height="310.00" viewBox="0 0 1280.1 310" overflow="hidden"><rect x="0" y="0" width="1280.1" height="340" rx="17" fill="#fff"/><rect x="3.2" y="5.4" width="1273.7" height="340" rx="14" fill="#03414a"/></svg></svg>
<svg style="position:absolute;left:1053px;top:1334px;overflow:visible" width="81" height="10"><svg x="0.90" y="0.70" width="78.10" height="8.00" viewBox="0 0 78.10 8.00" overflow="visible"><rect width="78.10" height="8.00" rx="4.00" fill="#fff"/></svg></svg>
<div class="t" id="ca" style="left:1004.0px;top:1359.8px;font-size:25.3px;line-height:25.3px;color:#ffffff;-webkit-text-stroke:0.7px #ffffff;letter-spacing:0.40px;">Choose Activity</div>
<svg style="position:absolute;left:490px;top:1439px;overflow:visible" width="48" height="37"><svg x="0.40" y="0.80" width="46.40" height="34.80" viewBox="0 0 40 30" overflow="visible"><g fill="#ffffff"><circle cx="4.4" cy="4" r="3.6"/><circle cx="20" cy="3.4" r="3.6"/><circle cx="35.6" cy="4" r="3.6"/><path d="M14.6 15.2 V12.2 Q14.6 8.2 18.6 8.2 H21.4 Q25.4 8.2 25.4 12.2 V15.2 Z"/><path d="M0.6 11.6 Q0.6 9.2 3 9.2 H5.4 Q7.4 9.2 7.4 11.2 V15.6 H33 V11.2 Q33 9.2 34.6 9.2 H37 Q39.4 9.2 39.4 11.6 V21.8 H33.4 L31.2 29.8 H25.2 L28.2 19.2 H11.8 L14.8 29.8 H8.8 L6.6 21.8 H0.6 Z"/></g></svg></svg>
<div class="t" id="s1" style="left:554.1px;top:1438.5px;font-size:25.8px;line-height:25.8px;color:#ffffff;-webkit-text-stroke:0.7px #ffffff;letter-spacing:0.17px;">Create Dewaniya</div>
<svg style="position:absolute;left:474px;top:1499px;overflow:visible" width="1239" height="5"><svg x="0.50" y="0.60" width="1236.80" height="3.00" viewBox="0 0 1236.8 3" overflow="visible"><rect x="0" y="0.5" width="1236.8" height="1.6" fill="#fff"/></svg></svg>
<svg style="position:absolute;left:490px;top:1526px;overflow:visible" width="48" height="58"><svg x="0.20" y="0.40" width="46.80" height="55.80" viewBox="0 0 47 56" overflow="visible"><path fill="#ffffff" d="M12.7 0.4 H35.5 V14 C35.5 24 31 31 27.8 33.2 V37.4 H29.6 V40.6 H18.6 V37.4 H20.4 V33.2 C17 31 12.7 24 12.7 14 Z"/><path fill="none" stroke="#ffffff" stroke-width="3.8" d="M7.4 4.6 H1.9 V12 C1.9 19 5 23.4 9.6 25.4 M39.6 4.6 H45.1 V12 C45.1 19 42 23.4 37.4 25.4"/><rect x="10" y="42.8" width="28.5" height="12.8" rx="1.6" fill="#ffffff"/></svg></svg>
<div class="t" id="s2" style="left:554.1px;top:1545.4px;font-size:25.8px;line-height:25.8px;color:#ffffff;-webkit-text-stroke:0.7px #ffffff;letter-spacing:0.45px;">Create Tournament</div>
<svg style="position:absolute;left:865px;top:1613px;overflow:visible" width="631" height="13"><svg x="0.60" y="0.80" width="629.40" height="11.20" viewBox="0 0 629.40 11.20" overflow="visible"><rect width="629.40" height="11.20" rx="5.60" fill="#4e4e4e"/></svg></svg>
<svg style="position:absolute;left:1795px;top:47px;overflow:visible" width="548" height="470"><svg x="0.20" y="0.90" width="545.90" height="468.00" viewBox="0 0 545.90 468.00" overflow="visible"><rect x="1.00" y="1.00" width="543.90" height="466.00" rx="22.50" fill="none" stroke="#ffffff" stroke-width="2"/></svg></svg>
<svg style="position:absolute;left:1796px;top:48px;overflow:visible" width="212" height="48"><svg x="0.40" y="0.80" width="209.60" height="45.40" viewBox="0 0 209.60 45.40" overflow="visible"><rect x="0.90" y="0.90" width="207.80" height="43.60" rx="21.80" fill="none" stroke="#ffffff" stroke-width="1.8"/></svg></svg>
<svg style="position:absolute;left:1814px;top:61px;overflow:visible" width="33" height="24"><svg x="0.40" y="0.40" width="30.80" height="21.80" viewBox="0 0 50 36" overflow="visible"><g fill="none" stroke="#ffffff" stroke-width="2.6" stroke-linecap="round" stroke-linejoin="round" ><rect x="1" y="1" width="48" height="34" rx="4"/><path d="M3 3.4 L21 17.4 Q25 20.4 29 17.4 L47 3.4"/><path d="M3 32.6 L19 15.8 M47 32.6 L31 15.8"/></g></svg></svg>
<div class="t" id="msgs" style="left:1861.8px;top:59.7px;font-size:22.3px;line-height:22.3px;color:#ffffff;-webkit-text-stroke:0.8px #ffffff;letter-spacing:0.20px;">Messages</div>
<svg style="position:absolute;left:2291px;top:62px;overflow:visible" width="45" height="44"><svg x="0.80" y="0.20" width="42.20" height="42.20" viewBox="0 0 42.2 42.2" overflow="visible"><circle cx="21.1" cy="21.1" r="21.1" fill="#fff"/></svg></svg>
<div class="t" id="zero" style="left:2305.9px;top:69.1px;font-size:25.4px;line-height:25.4px;color:#03414a;-webkit-text-stroke:0.9px #03414a;transform-origin:0 50%;transform:scaleX(0.949);">0</div>
<svg style="position:absolute;left:1795px;top:523px;overflow:visible" width="548" height="1111"><svg x="0.20" y="0.20" width="545.90" height="1109.10" viewBox="0 0 545.90 1109.10" overflow="visible"><rect x="1.00" y="1.00" width="543.90" height="1107.10" rx="22.50" fill="none" stroke="#ffffff" stroke-width="2"/></svg></svg>
<div class="t" id="ghost" style="left:1817.7px;top:560.5px;font-size:19.5px;line-height:19.5px;color:#0d4a53;letter-spacing:-0.22px;">azooz_spicy</div>
<svg style="position:absolute;left:1796px;top:524px;overflow:visible" width="234" height="47"><svg x="0.40" y="0.30" width="231.60" height="44.90" viewBox="0 0 231.60 44.90" overflow="visible"><rect x="0.90" y="0.90" width="229.80" height="43.10" rx="21.50" fill="#03414a" stroke="#ffffff" stroke-width="1.8"/></svg></svg>
<svg style="position:absolute;left:1814px;top:536px;overflow:visible" width="33" height="27"><svg x="0.40" y="0.40" width="31.00" height="25.20" viewBox="0 0 32 26" overflow="visible"><path fill="#ffffff" d="M16 0.6 C7 0.6 0.6 5.6 0.6 11.8 C0.6 15.4 2.6 18.4 5.8 20.4 C5.6 22.4 4.6 24.2 3 25.6 C6.6 25.4 9.4 24.2 11.4 22.6 C12.8 22.9 14.4 23 16 23 C25 23 31.4 18 31.4 11.8 C31.4 5.6 25 0.6 16 0.6 Z"/><g fill="#03414a"><circle cx="9.6" cy="11.8" r="2"/><circle cx="16" cy="11.8" r="2"/><circle cx="22.4" cy="11.8" r="2"/></g></svg></svg>
<div class="t" id="pc" style="left:1862.5px;top:535.0px;font-size:23.2px;line-height:23.2px;color:#ffffff;-webkit-text-stroke:0.8px #ffffff;letter-spacing:0.63px;">Public Chat</div>
<div class="t" id="ts0" style="left:1920.8px;top:610.7px;font-size:17.2px;line-height:17.2px;color:#ffffff;letter-spacing:-0.04px;">31 Dec 2025, 7:58 AM</div>
<svg style="position:absolute;left:1916px;top:650px;overflow:visible" width="93" height="63"><svg x="0.90" y="0.30" width="90.60" height="61.60" viewBox="0 0 90.60 61.60" overflow="visible"><path d="M1 0 H82.60 A8 8 0 0 1 90.60 8 V53.60 A8 8 0 0 1 82.60 61.60 H8 A8 8 0 0 1 0 53.60 V1 A1 1 0 0 1 1 0 Z" fill="#022e35"/></svg></svg>
<svg style="position:absolute;left:1814px;top:656px;overflow:visible" width="74" height="74"><svg x="0.50" y="0.30" width="72.00" height="72.00" viewBox="-36 -36 72 72" overflow="visible"><circle cx="0" cy="0" r="33.8" fill="none" stroke="#fff" stroke-width="2"/><g transform="translate(-27.2 -21.6) scale(1.11)"><g fill="none" stroke="#ffffff" stroke-width="1.25" stroke-linecap="round" stroke-linejoin="round" ><path d="M3.2 13.5 C1.2 8.5 3.5 5.5 8.5 5.8 C10.5 2.2 16.5 1.6 19.8 3.4 C23.5 0.4 30.5 0.8 33.2 3.6 C37.5 4.2 42.5 7.8 46.2 11.8 C48.6 14.2 48.4 17.8 47 20.2"/><path d="M3.6 25.2 C3.2 30.8 3.4 34.2 6.4 34.8 C12.5 35.6 19.5 33.6 25.5 35.4 C29.5 36.8 32.5 38.4 34.6 37.2 C38 33.6 40.2 30.2 42.2 26.4"/></g><g fill="#ffffff"><circle cx="9.6" cy="10" r="1.1"/><circle cx="16.2" cy="7.2" r="1.1"/><circle cx="23.6" cy="6.2" r="1.1"/><circle cx="31" cy="7.6" r="1.1"/><circle cx="7.2" cy="15.2" r="1"/></g><text x="0.8" y="25.6" textLength="46.6" lengthAdjust="spacingAndGlyphs" font-family="DejaVu Sans, sans-serif" font-size="16" fill="#ffffff">كوت</text></g></svg></svg>
<div class="t" id="nm0" style="left:1821.0px;top:733.2px;font-size:19.6px;line-height:19.6px;color:#ffffff;letter-spacing:0.05px;">TR007</div>
<div class="t" id="ghalia" style="left:1926.0px;top:668.2px;font-size:24.6px;line-height:24.6px;color:#ffffff;-webkit-text-stroke:0.4px #ffffff;letter-spacing:1.47px;">ghalia</div>
<div class="t" id="ts1" style="left:1920.8px;top:784.9px;font-size:17.2px;line-height:17.2px;color:#ffffff;">4 Jan 2026, 5:32 PM</div>
<svg style="position:absolute;left:1916px;top:824px;overflow:visible" width="59" height="64"><svg x="0.90" y="0.75" width="56.20" height="61.60" viewBox="0 0 56.20 61.60" overflow="visible"><path d="M1 0 H48.20 A8 8 0 0 1 56.20 8 V53.60 A8 8 0 0 1 48.20 61.60 H8 A8 8 0 0 1 0 53.60 V1 A1 1 0 0 1 1 0 Z" fill="#022e35"/></svg></svg>
<svg style="position:absolute;left:1814px;top:830px;overflow:visible" width="74" height="74"><svg x="0.50" y="0.75" width="72.00" height="72.00" viewBox="-36 -36 72 72" overflow="visible"><circle cx="0" cy="0" r="33.8" fill="none" stroke="#fff" stroke-width="2"/><g transform="translate(-27.2 -21.6) scale(1.11)"><g fill="none" stroke="#ffffff" stroke-width="1.25" stroke-linecap="round" stroke-linejoin="round" ><path d="M3.2 13.5 C1.2 8.5 3.5 5.5 8.5 5.8 C10.5 2.2 16.5 1.6 19.8 3.4 C23.5 0.4 30.5 0.8 33.2 3.6 C37.5 4.2 42.5 7.8 46.2 11.8 C48.6 14.2 48.4 17.8 47 20.2"/><path d="M3.6 25.2 C3.2 30.8 3.4 34.2 6.4 34.8 C12.5 35.6 19.5 33.6 25.5 35.4 C29.5 36.8 32.5 38.4 34.6 37.2 C38 33.6 40.2 30.2 42.2 26.4"/></g><g fill="#ffffff"><circle cx="9.6" cy="10" r="1.1"/><circle cx="16.2" cy="7.2" r="1.1"/><circle cx="23.6" cy="6.2" r="1.1"/><circle cx="31" cy="7.6" r="1.1"/><circle cx="7.2" cy="15.2" r="1"/></g><text x="0.8" y="25.6" textLength="46.6" lengthAdjust="spacingAndGlyphs" font-family="DejaVu Sans, sans-serif" font-size="16" fill="#ffffff">كوت</text></g></svg></svg>
<div class="t" id="nm1" style="left:1817.0px;top:907.7px;font-size:19.6px;line-height:19.6px;color:#ffffff;letter-spacing:0.98px;">fawaz0</div>
<svg style="position:absolute;left:1925px;top:840px;overflow:visible" width="36" height="36"><svg x="0.60" y="0.60" width="34.00" height="34.00" viewBox="0 0 34 34" overflow="visible"><g transform="translate(17.6 18.4) rotate(-42)"><path d="M5 5 C7 1.6 9.8 -2.6 12 -4.8 C14.2 -6.8 17.4 -5 16.4 -2 C14.8 2.4 12.6 8 9 12.6 Z" fill="#ecc49e"/><path d="M-9.4 -1 H9 V6 C9 12 5 15.8 0 15.8 C-6 15.8 -9.4 11 -9.4 5 Z" fill="#ecc49e"/><rect x="-9.4" y="-9.4" width="4.5" height="14" rx="2.25" fill="#ecc49e"/><rect x="-4.7" y="-14.2" width="4.5" height="18" rx="2.25" fill="#ecc49e"/><rect x="0" y="-15.4" width="4.5" height="19" rx="2.25" fill="#ecc49e"/><rect x="4.7" y="-12.4" width="4.4" height="16" rx="2.2" fill="#ecc49e"/><path d="M-4.8 -2 V3 M-0.1 -4 V3 M4.6 -3 V3" stroke="#d8a678" stroke-width="0.7"/><path d="M9 6 C9 12 5 15.8 0 15.8 C4 13 7 10 7.6 6 Z" fill="#d8a678" opacity="0.7"/></g><path d="M1 21.4 Q2.6 25.4 6.6 27.6 M3.6 20 Q5.2 23.8 8.6 25.8" fill="none" stroke="#8a7f7a" stroke-width="0.9" stroke-linecap="round"/><path d="M19.2 0.6 Q23.4 2.6 25 7 M17.6 2.8 Q21.2 4.6 22.8 8.4" fill="none" stroke="#8a7f7a" stroke-width="0.9" stroke-linecap="round"/></svg></svg>
<div class="t" id="ts2" style="left:1920.8px;top:959.0px;font-size:17.2px;line-height:17.2px;color:#ffffff;">4 Jan 2026, 5:32 PM</div>
<svg style="position:absolute;left:1916px;top:999px;overflow:visible" width="175" height="63"><svg x="0.90" y="0.20" width="172.40" height="61.60" viewBox="0 0 172.40 61.60" overflow="visible"><path d="M1 0 H164.40 A8 8 0 0 1 172.40 8 V53.60 A8 8 0 0 1 164.40 61.60 H8 A8 8 0 0 1 0 53.60 V1 A1 1 0 0 1 1 0 Z" fill="#022e35"/></svg></svg>
<svg style="position:absolute;left:1814px;top:1005px;overflow:visible" width="74" height="74"><svg x="0.50" y="0.20" width="72.00" height="72.00" viewBox="-36 -36 72 72" overflow="visible"><circle cx="0" cy="0" r="33.8" fill="none" stroke="#fff" stroke-width="2"/><g transform="translate(-27.2 -21.6) scale(1.11)"><g fill="none" stroke="#ffffff" stroke-width="1.25" stroke-linecap="round" stroke-linejoin="round" ><path d="M3.2 13.5 C1.2 8.5 3.5 5.5 8.5 5.8 C10.5 2.2 16.5 1.6 19.8 3.4 C23.5 0.4 30.5 0.8 33.2 3.6 C37.5 4.2 42.5 7.8 46.2 11.8 C48.6 14.2 48.4 17.8 47 20.2"/><path d="M3.6 25.2 C3.2 30.8 3.4 34.2 6.4 34.8 C12.5 35.6 19.5 33.6 25.5 35.4 C29.5 36.8 32.5 38.4 34.6 37.2 C38 33.6 40.2 30.2 42.2 26.4"/></g><g fill="#ffffff"><circle cx="9.6" cy="10" r="1.1"/><circle cx="16.2" cy="7.2" r="1.1"/><circle cx="23.6" cy="6.2" r="1.1"/><circle cx="31" cy="7.6" r="1.1"/><circle cx="7.2" cy="15.2" r="1"/></g><text x="0.8" y="25.6" textLength="46.6" lengthAdjust="spacingAndGlyphs" font-family="DejaVu Sans, sans-serif" font-size="16" fill="#ffffff">كوت</text></g></svg></svg>
<div class="t" id="nm2" style="left:1817.0px;top:1082.1px;font-size:19.6px;line-height:19.6px;color:#ffffff;letter-spacing:0.98px;">fawaz0</div>
<div class="t" id="ar1" style="left:1926.3px;top:1016.5px;font-size:24px;line-height:24px;color:#ffffff;font-family:&quot;DejaVu Sans&quot;,sans-serif;direction:rtl;transform-origin:0 50%;transform:scaleX(1.318);">سلام عليكم</div>
<div class="t" id="ts3" style="left:1920.8px;top:1133.2px;font-size:17.2px;line-height:17.2px;color:#ffffff;">4 Jan 2026, 5:33 PM</div>
<svg style="position:absolute;left:1916px;top:1173px;overflow:visible" width="251" height="64"><svg x="0.90" y="0.65" width="249.00" height="61.60" viewBox="0 0 249.00 61.60" overflow="visible"><path d="M1 0 H241.00 A8 8 0 0 1 249.00 8 V53.60 A8 8 0 0 1 241.00 61.60 H8 A8 8 0 0 1 0 53.60 V1 A1 1 0 0 1 1 0 Z" fill="#022e35"/></svg></svg>
<svg style="position:absolute;left:1814px;top:1179px;overflow:visible" width="74" height="74"><svg x="0.50" y="0.65" width="72.00" height="72.00" viewBox="-36 -36 72 72" overflow="visible"><circle cx="0" cy="0" r="33.8" fill="none" stroke="#fff" stroke-width="2"/><g transform="translate(-27.2 -21.6) scale(1.11)"><g fill="none" stroke="#ffffff" stroke-width="1.25" stroke-linecap="round" stroke-linejoin="round" ><path d="M3.2 13.5 C1.2 8.5 3.5 5.5 8.5 5.8 C10.5 2.2 16.5 1.6 19.8 3.4 C23.5 0.4 30.5 0.8 33.2 3.6 C37.5 4.2 42.5 7.8 46.2 11.8 C48.6 14.2 48.4 17.8 47 20.2"/><path d="M3.6 25.2 C3.2 30.8 3.4 34.2 6.4 34.8 C12.5 35.6 19.5 33.6 25.5 35.4 C29.5 36.8 32.5 38.4 34.6 37.2 C38 33.6 40.2 30.2 42.2 26.4"/></g><g fill="#ffffff"><circle cx="9.6" cy="10" r="1.1"/><circle cx="16.2" cy="7.2" r="1.1"/><circle cx="23.6" cy="6.2" r="1.1"/><circle cx="31" cy="7.6" r="1.1"/><circle cx="7.2" cy="15.2" r="1"/></g><text x="0.8" y="25.6" textLength="46.6" lengthAdjust="spacingAndGlyphs" font-family="DejaVu Sans, sans-serif" font-size="16" fill="#ffffff">كوت</text></g></svg></svg>
<div class="t" id="nm3" style="left:1817.0px;top:1256.6px;font-size:19.6px;line-height:19.6px;color:#ffffff;letter-spacing:0.98px;">fawaz0</div>
<div class="t" id="ar2" style="left:1922.8px;top:1190.2px;font-size:24px;line-height:24px;color:#ffffff;font-family:&quot;DejaVu Sans&quot;,sans-serif;direction:rtl;white-space:pre;transform-origin:0 50%;transform:scaleX(1.212);">كل عام  وانتم بخير</div>
<div class="t" id="ts4" style="left:1920.8px;top:1307.3px;font-size:17.2px;line-height:17.2px;color:#ffffff;">4 Jan 2026, 5:34 PM</div>
<svg style="position:absolute;left:1916px;top:1348px;overflow:visible" width="382" height="63"><svg x="0.90" y="0.10" width="379.80" height="61.60" viewBox="0 0 379.80 61.60" overflow="visible"><path d="M1 0 H371.80 A8 8 0 0 1 379.80 8 V53.60 A8 8 0 0 1 371.80 61.60 H8 A8 8 0 0 1 0 53.60 V1 A1 1 0 0 1 1 0 Z" fill="#022e35"/></svg></svg>
<svg style="position:absolute;left:1814px;top:1354px;overflow:visible" width="74" height="74"><svg x="0.50" y="0.10" width="72.00" height="72.00" viewBox="-36 -36 72 72" overflow="visible"><circle cx="0" cy="0" r="33.8" fill="none" stroke="#fff" stroke-width="2"/><g transform="translate(-27.2 -21.6) scale(1.11)"><g fill="none" stroke="#ffffff" stroke-width="1.25" stroke-linecap="round" stroke-linejoin="round" ><path d="M3.2 13.5 C1.2 8.5 3.5 5.5 8.5 5.8 C10.5 2.2 16.5 1.6 19.8 3.4 C23.5 0.4 30.5 0.8 33.2 3.6 C37.5 4.2 42.5 7.8 46.2 11.8 C48.6 14.2 48.4 17.8 47 20.2"/><path d="M3.6 25.2 C3.2 30.8 3.4 34.2 6.4 34.8 C12.5 35.6 19.5 33.6 25.5 35.4 C29.5 36.8 32.5 38.4 34.6 37.2 C38 33.6 40.2 30.2 42.2 26.4"/></g><g fill="#ffffff"><circle cx="9.6" cy="10" r="1.1"/><circle cx="16.2" cy="7.2" r="1.1"/><circle cx="23.6" cy="6.2" r="1.1"/><circle cx="31" cy="7.6" r="1.1"/><circle cx="7.2" cy="15.2" r="1"/></g><text x="0.8" y="25.6" textLength="46.6" lengthAdjust="spacingAndGlyphs" font-family="DejaVu Sans, sans-serif" font-size="16" fill="#ffffff">كوت</text></g></svg></svg>
<div class="t" id="nm4" style="left:1817.0px;top:1431.0px;font-size:19.6px;line-height:19.6px;color:#ffffff;letter-spacing:0.98px;">fawaz0</div>
<svg style="position:absolute;left:1927px;top:1364px;overflow:visible" width="31" height="35"><svg x="0.90" y="0.40" width="29.00" height="33.40" viewBox="0 0 30 34" overflow="visible"><path d="M15 24 V33.4" stroke="#4a9c2c" stroke-width="2.2" fill="none"/><path d="M15 28.4 C10 28.6 4.6 26.6 1.2 22.6 C6.4 21.6 11.6 23 15 26.2 C18.4 23 23.6 21.6 28.8 22.6 C25.4 26.6 20 28.6 15 28.4 Z" fill="#46a832"/><path d="M8.6 21.4 C10.6 24.6 13 25.8 15 25.8 C17 25.8 19.4 24.6 21.4 21.4 Z" fill="#2f8a26"/><path d="M15 0.8 C18.8 2.6 22.4 4.6 23.8 8 C25.6 13.6 22.6 21.6 15 24.6 C7.4 21.6 4.4 13.6 6.2 8 C7.6 4.6 11.2 2.6 15 0.8 Z" fill="#d9121a"/><path d="M6.2 8 C7.6 4.6 11.2 2.6 15 0.8 C13 4.6 11.6 8.6 11.8 13 C12 17.6 13.4 21.6 15 24.6 C7.4 21.6 4.4 13.6 6.2 8 Z" fill="#f0242c"/><path d="M15 0.8 C17.6 3.4 19.4 6.6 19.6 10.6 C19.8 15.6 17.6 20.6 15 24.6 C13.4 21.6 12 17.6 11.8 13 C11.6 8.6 13 4.6 15 0.8 Z" fill="#b80c14"/><path d="M19.6 10.6 C21.4 9.4 22.8 8.6 23.8 8 C25.6 13.6 22.6 21.6 15 24.6 C17.6 20.6 19.8 15.6 19.6 10.6 Z" fill="#e8161e"/></svg></svg>
<svg style="position:absolute;left:1968px;top:1364px;overflow:visible" width="31" height="35"><svg x="0.45" y="0.40" width="29.00" height="33.40" viewBox="0 0 30 34" overflow="visible"><path d="M15 24 V33.4" stroke="#4a9c2c" stroke-width="2.2" fill="none"/><path d="M15 28.4 C10 28.6 4.6 26.6 1.2 22.6 C6.4 21.6 11.6 23 15 26.2 C18.4 23 23.6 21.6 28.8 22.6 C25.4 26.6 20 28.6 15 28.4 Z" fill="#46a832"/><path d="M8.6 21.4 C10.6 24.6 13 25.8 15 25.8 C17 25.8 19.4 24.6 21.4 21.4 Z" fill="#2f8a26"/><path d="M15 0.8 C18.8 2.6 22.4 4.6 23.8 8 C25.6 13.6 22.6 21.6 15 24.6 C7.4 21.6 4.4 13.6 6.2 8 C7.6 4.6 11.2 2.6 15 0.8 Z" fill="#d9121a"/><path d="M6.2 8 C7.6 4.6 11.2 2.6 15 0.8 C13 4.6 11.6 8.6 11.8 13 C12 17.6 13.4 21.6 15 24.6 C7.4 21.6 4.4 13.6 6.2 8 Z" fill="#f0242c"/><path d="M15 0.8 C17.6 3.4 19.4 6.6 19.6 10.6 C19.8 15.6 17.6 20.6 15 24.6 C13.4 21.6 12 17.6 11.8 13 C11.6 8.6 13 4.6 15 0.8 Z" fill="#b80c14"/><path d="M19.6 10.6 C21.4 9.4 22.8 8.6 23.8 8 C25.6 13.6 22.6 21.6 15 24.6 C17.6 20.6 19.8 15.6 19.6 10.6 Z" fill="#e8161e"/></svg></svg>
<svg style="position:absolute;left:2009px;top:1364px;overflow:visible" width="30" height="35"><svg x="0.00" y="0.40" width="29.00" height="33.40" viewBox="0 0 30 34" overflow="visible"><path d="M15 24 V33.4" stroke="#4a9c2c" stroke-width="2.2" fill="none"/><path d="M15 28.4 C10 28.6 4.6 26.6 1.2 22.6 C6.4 21.6 11.6 23 15 26.2 C18.4 23 23.6 21.6 28.8 22.6 C25.4 26.6 20 28.6 15 28.4 Z" fill="#46a832"/><path d="M8.6 21.4 C10.6 24.6 13 25.8 15 25.8 C17 25.8 19.4 24.6 21.4 21.4 Z" fill="#2f8a26"/><path d="M15 0.8 C18.8 2.6 22.4 4.6 23.8 8 C25.6 13.6 22.6 21.6 15 24.6 C7.4 21.6 4.4 13.6 6.2 8 C7.6 4.6 11.2 2.6 15 0.8 Z" fill="#d9121a"/><path d="M6.2 8 C7.6 4.6 11.2 2.6 15 0.8 C13 4.6 11.6 8.6 11.8 13 C12 17.6 13.4 21.6 15 24.6 C7.4 21.6 4.4 13.6 6.2 8 Z" fill="#f0242c"/><path d="M15 0.8 C17.6 3.4 19.4 6.6 19.6 10.6 C19.8 15.6 17.6 20.6 15 24.6 C13.4 21.6 12 17.6 11.8 13 C11.6 8.6 13 4.6 15 0.8 Z" fill="#b80c14"/><path d="M19.6 10.6 C21.4 9.4 22.8 8.6 23.8 8 C25.6 13.6 22.6 21.6 15 24.6 C17.6 20.6 19.8 15.6 19.6 10.6 Z" fill="#e8161e"/></svg></svg>
<svg style="position:absolute;left:2049px;top:1364px;overflow:visible" width="31" height="35"><svg x="0.55" y="0.40" width="29.00" height="33.40" viewBox="0 0 30 34" overflow="visible"><path d="M15 24 V33.4" stroke="#4a9c2c" stroke-width="2.2" fill="none"/><path d="M15 28.4 C10 28.6 4.6 26.6 1.2 22.6 C6.4 21.6 11.6 23 15 26.2 C18.4 23 23.6 21.6 28.8 22.6 C25.4 26.6 20 28.6 15 28.4 Z" fill="#46a832"/><path d="M8.6 21.4 C10.6 24.6 13 25.8 15 25.8 C17 25.8 19.4 24.6 21.4 21.4 Z" fill="#2f8a26"/><path d="M15 0.8 C18.8 2.6 22.4 4.6 23.8 8 C25.6 13.6 22.6 21.6 15 24.6 C7.4 21.6 4.4 13.6 6.2 8 C7.6 4.6 11.2 2.6 15 0.8 Z" fill="#d9121a"/><path d="M6.2 8 C7.6 4.6 11.2 2.6 15 0.8 C13 4.6 11.6 8.6 11.8 13 C12 17.6 13.4 21.6 15 24.6 C7.4 21.6 4.4 13.6 6.2 8 Z" fill="#f0242c"/><path d="M15 0.8 C17.6 3.4 19.4 6.6 19.6 10.6 C19.8 15.6 17.6 20.6 15 24.6 C13.4 21.6 12 17.6 11.8 13 C11.6 8.6 13 4.6 15 0.8 Z" fill="#b80c14"/><path d="M19.6 10.6 C21.4 9.4 22.8 8.6 23.8 8 C25.6 13.6 22.6 21.6 15 24.6 C17.6 20.6 19.8 15.6 19.6 10.6 Z" fill="#e8161e"/></svg></svg>
<svg style="position:absolute;left:2090px;top:1364px;overflow:visible" width="31" height="35"><svg x="0.10" y="0.40" width="29.00" height="33.40" viewBox="0 0 30 34" overflow="visible"><path d="M15 24 V33.4" stroke="#4a9c2c" stroke-width="2.2" fill="none"/><path d="M15 28.4 C10 28.6 4.6 26.6 1.2 22.6 C6.4 21.6 11.6 23 15 26.2 C18.4 23 23.6 21.6 28.8 22.6 C25.4 26.6 20 28.6 15 28.4 Z" fill="#46a832"/><path d="M8.6 21.4 C10.6 24.6 13 25.8 15 25.8 C17 25.8 19.4 24.6 21.4 21.4 Z" fill="#2f8a26"/><path d="M15 0.8 C18.8 2.6 22.4 4.6 23.8 8 C25.6 13.6 22.6 21.6 15 24.6 C7.4 21.6 4.4 13.6 6.2 8 C7.6 4.6 11.2 2.6 15 0.8 Z" fill="#d9121a"/><path d="M6.2 8 C7.6 4.6 11.2 2.6 15 0.8 C13 4.6 11.6 8.6 11.8 13 C12 17.6 13.4 21.6 15 24.6 C7.4 21.6 4.4 13.6 6.2 8 Z" fill="#f0242c"/><path d="M15 0.8 C17.6 3.4 19.4 6.6 19.6 10.6 C19.8 15.6 17.6 20.6 15 24.6 C13.4 21.6 12 17.6 11.8 13 C11.6 8.6 13 4.6 15 0.8 Z" fill="#b80c14"/><path d="M19.6 10.6 C21.4 9.4 22.8 8.6 23.8 8 C25.6 13.6 22.6 21.6 15 24.6 C17.6 20.6 19.8 15.6 19.6 10.6 Z" fill="#e8161e"/></svg></svg>
<svg style="position:absolute;left:2130px;top:1364px;overflow:visible" width="31" height="35"><svg x="0.65" y="0.40" width="29.00" height="33.40" viewBox="0 0 30 34" overflow="visible"><path d="M15 24 V33.4" stroke="#4a9c2c" stroke-width="2.2" fill="none"/><path d="M15 28.4 C10 28.6 4.6 26.6 1.2 22.6 C6.4 21.6 11.6 23 15 26.2 C18.4 23 23.6 21.6 28.8 22.6 C25.4 26.6 20 28.6 15 28.4 Z" fill="#46a832"/><path d="M8.6 21.4 C10.6 24.6 13 25.8 15 25.8 C17 25.8 19.4 24.6 21.4 21.4 Z" fill="#2f8a26"/><path d="M15 0.8 C18.8 2.6 22.4 4.6 23.8 8 C25.6 13.6 22.6 21.6 15 24.6 C7.4 21.6 4.4 13.6 6.2 8 C7.6 4.6 11.2 2.6 15 0.8 Z" fill="#d9121a"/><path d="M6.2 8 C7.6 4.6 11.2 2.6 15 0.8 C13 4.6 11.6 8.6 11.8 13 C12 17.6 13.4 21.6 15 24.6 C7.4 21.6 4.4 13.6 6.2 8 Z" fill="#f0242c"/><path d="M15 0.8 C17.6 3.4 19.4 6.6 19.6 10.6 C19.8 15.6 17.6 20.6 15 24.6 C13.4 21.6 12 17.6 11.8 13 C11.6 8.6 13 4.6 15 0.8 Z" fill="#b80c14"/><path d="M19.6 10.6 C21.4 9.4 22.8 8.6 23.8 8 C25.6 13.6 22.6 21.6 15 24.6 C17.6 20.6 19.8 15.6 19.6 10.6 Z" fill="#e8161e"/></svg></svg>
<svg style="position:absolute;left:2171px;top:1364px;overflow:visible" width="31" height="35"><svg x="0.20" y="0.40" width="29.00" height="33.40" viewBox="0 0 30 34" overflow="visible"><path d="M15 24 V33.4" stroke="#4a9c2c" stroke-width="2.2" fill="none"/><path d="M15 28.4 C10 28.6 4.6 26.6 1.2 22.6 C6.4 21.6 11.6 23 15 26.2 C18.4 23 23.6 21.6 28.8 22.6 C25.4 26.6 20 28.6 15 28.4 Z" fill="#46a832"/><path d="M8.6 21.4 C10.6 24.6 13 25.8 15 25.8 C17 25.8 19.4 24.6 21.4 21.4 Z" fill="#2f8a26"/><path d="M15 0.8 C18.8 2.6 22.4 4.6 23.8 8 C25.6 13.6 22.6 21.6 15 24.6 C7.4 21.6 4.4 13.6 6.2 8 C7.6 4.6 11.2 2.6 15 0.8 Z" fill="#d9121a"/><path d="M6.2 8 C7.6 4.6 11.2 2.6 15 0.8 C13 4.6 11.6 8.6 11.8 13 C12 17.6 13.4 21.6 15 24.6 C7.4 21.6 4.4 13.6 6.2 8 Z" fill="#f0242c"/><path d="M15 0.8 C17.6 3.4 19.4 6.6 19.6 10.6 C19.8 15.6 17.6 20.6 15 24.6 C13.4 21.6 12 17.6 11.8 13 C11.6 8.6 13 4.6 15 0.8 Z" fill="#b80c14"/><path d="M19.6 10.6 C21.4 9.4 22.8 8.6 23.8 8 C25.6 13.6 22.6 21.6 15 24.6 C17.6 20.6 19.8 15.6 19.6 10.6 Z" fill="#e8161e"/></svg></svg>
<svg style="position:absolute;left:2211px;top:1364px;overflow:visible" width="31" height="35"><svg x="0.75" y="0.40" width="29.00" height="33.40" viewBox="0 0 30 34" overflow="visible"><path d="M15 24 V33.4" stroke="#4a9c2c" stroke-width="2.2" fill="none"/><path d="M15 28.4 C10 28.6 4.6 26.6 1.2 22.6 C6.4 21.6 11.6 23 15 26.2 C18.4 23 23.6 21.6 28.8 22.6 C25.4 26.6 20 28.6 15 28.4 Z" fill="#46a832"/><path d="M8.6 21.4 C10.6 24.6 13 25.8 15 25.8 C17 25.8 19.4 24.6 21.4 21.4 Z" fill="#2f8a26"/><path d="M15 0.8 C18.8 2.6 22.4 4.6 23.8 8 C25.6 13.6 22.6 21.6 15 24.6 C7.4 21.6 4.4 13.6 6.2 8 C7.6 4.6 11.2 2.6 15 0.8 Z" fill="#d9121a"/><path d="M6.2 8 C7.6 4.6 11.2 2.6 15 0.8 C13 4.6 11.6 8.6 11.8 13 C12 17.6 13.4 21.6 15 24.6 C7.4 21.6 4.4 13.6 6.2 8 Z" fill="#f0242c"/><path d="M15 0.8 C17.6 3.4 19.4 6.6 19.6 10.6 C19.8 15.6 17.6 20.6 15 24.6 C13.4 21.6 12 17.6 11.8 13 C11.6 8.6 13 4.6 15 0.8 Z" fill="#b80c14"/><path d="M19.6 10.6 C21.4 9.4 22.8 8.6 23.8 8 C25.6 13.6 22.6 21.6 15 24.6 C17.6 20.6 19.8 15.6 19.6 10.6 Z" fill="#e8161e"/></svg></svg>
<svg style="position:absolute;left:2252px;top:1364px;overflow:visible" width="31" height="35"><svg x="0.30" y="0.40" width="29.00" height="33.40" viewBox="0 0 30 34" overflow="visible"><path d="M15 24 V33.4" stroke="#4a9c2c" stroke-width="2.2" fill="none"/><path d="M15 28.4 C10 28.6 4.6 26.6 1.2 22.6 C6.4 21.6 11.6 23 15 26.2 C18.4 23 23.6 21.6 28.8 22.6 C25.4 26.6 20 28.6 15 28.4 Z" fill="#46a832"/><path d="M8.6 21.4 C10.6 24.6 13 25.8 15 25.8 C17 25.8 19.4 24.6 21.4 21.4 Z" fill="#2f8a26"/><path d="M15 0.8 C18.8 2.6 22.4 4.6 23.8 8 C25.6 13.6 22.6 21.6 15 24.6 C7.4 21.6 4.4 13.6 6.2 8 C7.6 4.6 11.2 2.6 15 0.8 Z" fill="#d9121a"/><path d="M6.2 8 C7.6 4.6 11.2 2.6 15 0.8 C13 4.6 11.6 8.6 11.8 13 C12 17.6 13.4 21.6 15 24.6 C7.4 21.6 4.4 13.6 6.2 8 Z" fill="#f0242c"/><path d="M15 0.8 C17.6 3.4 19.4 6.6 19.6 10.6 C19.8 15.6 17.6 20.6 15 24.6 C13.4 21.6 12 17.6 11.8 13 C11.6 8.6 13 4.6 15 0.8 Z" fill="#b80c14"/><path d="M19.6 10.6 C21.4 9.4 22.8 8.6 23.8 8 C25.6 13.6 22.6 21.6 15 24.6 C17.6 20.6 19.8 15.6 19.6 10.6 Z" fill="#e8161e"/></svg></svg>
<svg style="position:absolute;left:1804px;top:1536px;overflow:visible" width="81" height="81"><svg x="0.00" y="0.20" width="79.40" height="79.40" viewBox="0 0 79.40 79.40" overflow="visible"><rect x="0.85" y="0.85" width="77.70" height="77.70" rx="38.85" fill="none" stroke="#ffffff" stroke-width="1.7"/></svg></svg>
<svg style="position:absolute;left:1828px;top:1574px;overflow:visible" width="33" height="6"><svg x="0.00" y="0.00" width="31.20" height="4.10" viewBox="0 0 31.20 4.10" overflow="visible"><rect width="31.20" height="4.10" rx="0.00" fill="#fff"/></svg></svg>
<svg style="position:absolute;left:1841px;top:1560px;overflow:visible" width="6" height="33"><svg x="0.40" y="0.40" width="4.40" height="31.20" viewBox="0 0 4.40 31.20" overflow="visible"><rect width="4.40" height="31.20" rx="0.00" fill="#fff"/></svg></svg>
<svg style="position:absolute;left:1892px;top:1522px;overflow:visible" width="441" height="101"><svg x="0.30" y="0.00" width="439.20" height="99.60" viewBox="0 0 439.20 99.60" overflow="visible"><rect x="0.85" y="0.85" width="437.50" height="97.90" rx="48.95" fill="none" stroke="#ffffff" stroke-width="1.7"/></svg></svg>
<div class="t" id="ph" style="left:1933.0px;top:1550.3px;font-size:25.6px;line-height:25.6px;color:#5b8a90;-webkit-text-stroke:0.3px #5b8a90;letter-spacing:0.05px;">Type your message...</div>
</body></html>
